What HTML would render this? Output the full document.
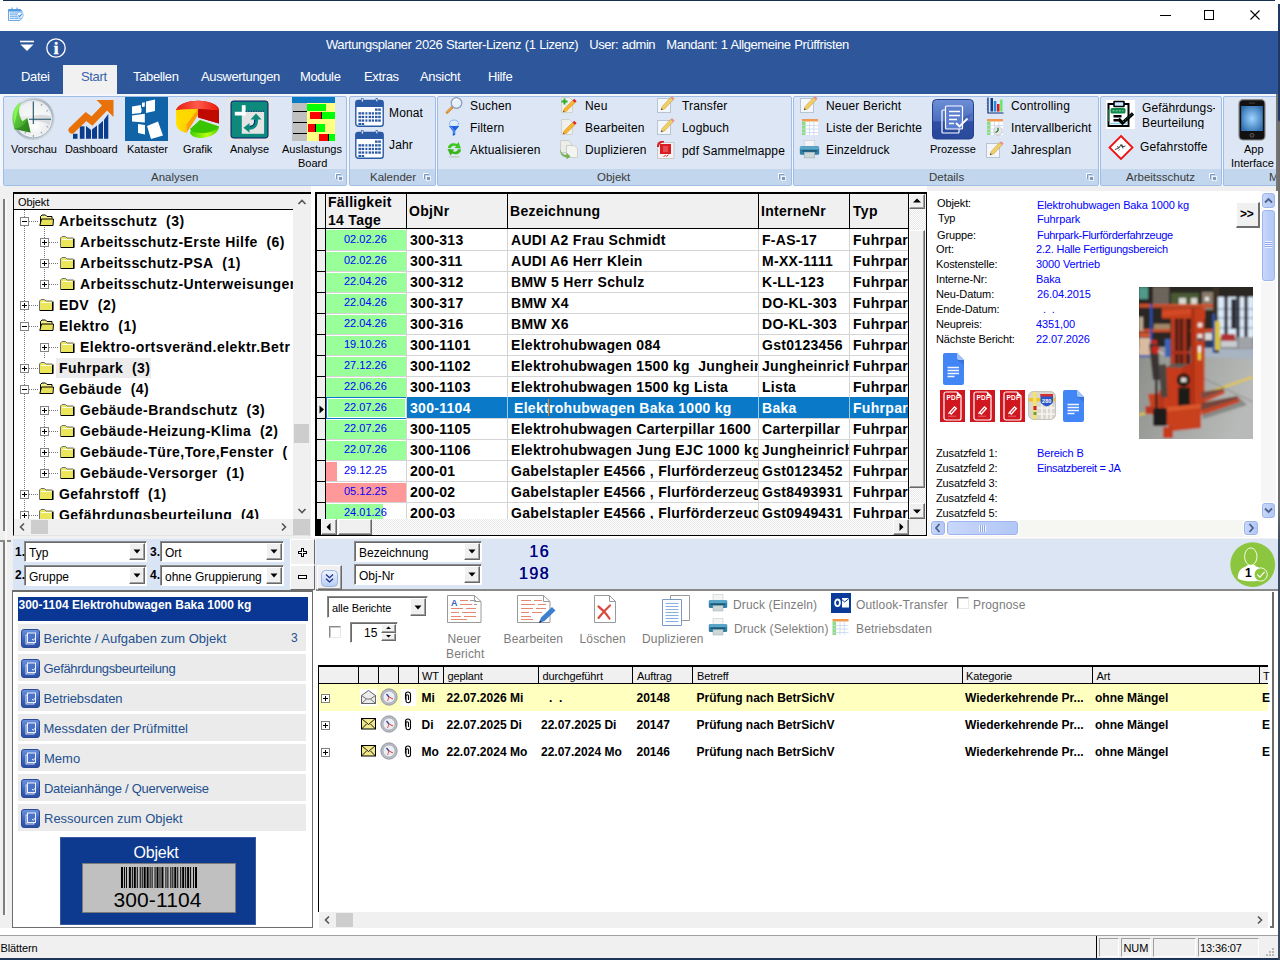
<!DOCTYPE html>
<html><head><meta charset="utf-8">
<style>
*{box-sizing:border-box;margin:0;padding:0}
html,body{width:1280px;height:960px;overflow:hidden;background:#fff;font-family:"Liberation Sans",sans-serif;font-size:12px;color:#000}
.a{position:absolute}
.t{position:absolute;white-space:nowrap;line-height:1}
#blue{left:0;top:31px;width:1278px;height:63px;background:#2e579b}
.menu{color:#fff;font-size:13px;top:70px;letter-spacing:-0.35px}
.grp{position:absolute;top:96px;height:90px;background:#dce6f4;border:1px solid #9ebde7;border-radius:2px}
.grp .ft{position:absolute;left:0;right:0;bottom:0;height:16px;background:#c2d6ed}
.grp .fl{position:absolute;bottom:2px;font-size:11.5px;color:#3b3b3b;line-height:1;white-space:nowrap}
.rl{position:absolute;font-size:12px;line-height:1;white-space:nowrap;color:#000;letter-spacing:0.15px}
.rl.b{font-size:11px;letter-spacing:0}
.ms{font-size:11px;letter-spacing:-0.12px}
.tb{font-size:14px;font-weight:bold;letter-spacing:0.45px}
.gb{font-size:14px;font-weight:bold;letter-spacing:0.3px}
.dl{position:absolute;width:8px;height:8px;bottom:4px}
</style></head><body>
<!-- TITLE BAR -->
<div class="a" style="left:3px;top:0;width:1272px;height:1px;background:#17304f"></div>
<div class="a" style="left:1278px;top:4px;width:2px;height:956px;background:linear-gradient(#1f3864 0,#1f3864 116px,#6e6e6e 118px,#6e6e6e 500px,#3c4a60 540px,#3c4a60 100%);z-index:50"></div>
<svg class="a" style="left:7px;top:6px" width="18" height="16" viewBox="0 0 18 16"><path d="M1.500 3.500h12l1.500 1.500v7l-2 2.500h-11.500z" fill="#eaf3fd" stroke="#6aa8e6"/><rect x="1.500" y="3.500" width="12.500" height="2" fill="#4a98e0"/><path d="M5 1.500v3M10 1.500v3" stroke="#4a98e0" stroke-width="1"/><path d="M3 7h8M3 8.800h8M3 10.600h8M3 12.400h8" stroke="#5aa2e4" stroke-width="0.900"/><path d="M5 6.500v6.500M7.500 6.500v6.500" stroke="#cfe2f8" stroke-width="0.500"/><circle cx="13" cy="9.300" r="3.300" fill="#f4f9ff" stroke="#7ab2ea" stroke-width="0.800"/><path d="M11.300 9.300l1.300 1.400 2.300-2.800" stroke="#3a8ee0" stroke-width="1.100" fill="none"/></svg>
<svg class="a" style="left:1155px;top:8px" width="110" height="14" viewBox="0 0 110 14"><path d="M5 7.5h11" stroke="#000" stroke-width="1"/><rect x="49.5" y="2.5" width="9" height="9" fill="none" stroke="#000"/><path d="M95.5 2.5l9 9M104.500 2.500l-9 9" stroke="#000" stroke-width="1.1"/></svg>
<!-- BLUE BAR -->
<div id="blue" class="a"></div>
<svg class="a" style="left:18px;top:38px" width="52" height="22" viewBox="0 0 52 22"><path d="M2 3.500h14" stroke="#fff" stroke-width="1.6"/><path d="M2.500 6.500h13l-6.500 6.500z" fill="#fff"/><circle cx="38" cy="10" r="9.200" fill="none" stroke="#fff" stroke-width="1.300"/><text x="38" y="16" font-family="Liberation Serif" font-weight="bold" font-size="17" fill="#fff" stroke="#fff" stroke-width="0.500" text-anchor="middle">i</text></svg>
<div class="t" style="left:326px;top:38px;color:#fff;font-size:13px;letter-spacing:-0.42px;word-spacing:0.5px">Wartungsplaner 2026 Starter-Lizenz (1 Lizenz)&nbsp;&nbsp;&nbsp;User: admin&nbsp;&nbsp;&nbsp;Mandant: 1 Allgemeine Prüffristen</div>
<div class="a" style="left:63px;top:65px;width:54px;height:29px;background:#f1f1f1"></div>
<div class="t menu" style="left:21px">Datei</div>
<div class="t menu" style="left:81px;color:#3a62a8">Start</div>
<div class="t menu" style="left:133px">Tabellen</div>
<div class="t menu" style="left:201px">Auswertungen</div>
<div class="t menu" style="left:300px">Module</div>
<div class="t menu" style="left:364px">Extras</div>
<div class="t menu" style="left:420px">Ansicht</div>
<div class="t menu" style="left:488px">Hilfe</div>
<!-- RIBBON -->
<div class="a" style="left:0;top:94px;width:1278px;height:94px;background:#f4f6fa"></div>
<div class="grp" id="g1" style="left:3px;width:344px"><div class="ft"></div><div class="fl" style="left:147px">Analysen</div></div>
<div class="grp" id="g2" style="left:349px;width:87px"><div class="ft"></div><div class="fl" style="left:20px">Kalender</div></div>
<div class="grp" id="g3" style="left:437px;width:355px"><div class="ft"></div><div class="fl" style="left:159px">Objekt</div></div>
<div class="grp" id="g4" style="left:793px;width:306px"><div class="ft"></div><div class="fl" style="left:135px">Details</div></div>
<div class="grp" id="g5" style="left:1100px;width:122px"><div class="ft"></div><div class="fl" style="left:25px">Arbeitsschutz</div></div>
<div class="grp" id="g6" style="left:1223px;width:55px;border-right:0;overflow:hidden"><div class="ft"></div><div class="fl" style="left:45px">M</div></div>
<svg width="0" height="0" style="position:absolute">
<defs>
<linearGradient id="gGreen" x1="0" y1="0" x2="1" y2="1"><stop offset="0" stop-color="#7af04a"/><stop offset="1" stop-color="#2c8a1f"/></linearGradient>
<radialGradient id="gClock" cx="0.55" cy="0.7" r="0.7"><stop offset="0" stop-color="#ffffff"/><stop offset="1" stop-color="#d4d8da"/></radialGradient>
<linearGradient id="gPro" x1="0" y1="0" x2="0" y2="1"><stop offset="0" stop-color="#6e8fd6"/><stop offset="0.55" stop-color="#4a6cbf"/><stop offset="0.56" stop-color="#2e4fa3"/><stop offset="1" stop-color="#2a4a9c"/></linearGradient>
<radialGradient id="gPhone" cx="0.5" cy="0.5" r="0.6"><stop offset="0" stop-color="#9fd4ff"/><stop offset="1" stop-color="#2f6fb0"/></radialGradient>
<linearGradient id="gRed" x1="0" y1="0" x2="1" y2="0"><stop offset="0" stop-color="#e81a0c"/><stop offset="0.5" stop-color="#ff5a4a"/><stop offset="1" stop-color="#e81a0c"/></linearGradient>
<linearGradient id="gYel" x1="0" y1="0" x2="1" y2="0"><stop offset="0" stop-color="#ffe400"/><stop offset="1" stop-color="#ffb000"/></linearGradient>
<linearGradient id="gGr2" x1="0" y1="0" x2="1" y2="0"><stop offset="0" stop-color="#3fd000"/><stop offset="0.6" stop-color="#b8ff10"/><stop offset="1" stop-color="#4fd000"/></linearGradient>
<symbol id="pencil" viewBox="0 0 18 18"><rect x="0.5" y="2.5" width="13" height="14" fill="#f3f7fc" stroke="#b9c4d2"/><path d="M4 14l1.200-3.600 8.400-9 2.600 2.400-8.600 9.200z" fill="#f2cf62" stroke="#b8923a" stroke-width="0.500"/><path d="M13.600 1.400l1.400-1.200 2.600 2.400-1.400 1.400z" fill="#ee8a8a"/><path d="M4 14l0.600-1.900 1.300 1.300z" fill="#444"/></symbol>
<symbol id="pencil2" viewBox="0 0 18 18"><path d="M1.500 1.500h8l3 3v12h-11z" fill="#efefec" stroke="#d2d2cc"/><path d="M3 16l1-3 8.600-8.600 2.400 2.400-8.800 8.600z" fill="#f6b52c" stroke="#d98a1c" stroke-width="0.500"/><path d="M12.600 4.400l1.600-1.600 2.400 2.400-1.600 1.600z" fill="#e02424"/><path d="M3 16l0.500-1.600 1.100 1.100z" fill="#444"/></symbol>
<symbol id="grid" viewBox="0 0 18 18"><rect x="1" y="1" width="16" height="16" fill="#fff"/><rect x="1" y="1" width="16" height="2.500" fill="#f29a4e"/><rect x="1" y="3.500" width="3.600" height="13.500" fill="#8fdc86"/><path d="M1 7.500h16M1 11h16M1 14.500h16M8.500 3.500v13.500M12.800 3.500v13.500" stroke="#c6d6ee" stroke-width="0.800"/></symbol>
<symbol id="printer" viewBox="0 0 20 18"><rect x="5" y="0.500" width="10" height="6" fill="#f2f4f6" stroke="#c8ccd0" stroke-width="0.600"/><rect x="0.800" y="6" width="18.400" height="8" rx="1.500" fill="#2f7ea6"/><rect x="0.800" y="6" width="18.400" height="3" rx="1.500" fill="#5aa6c8"/><rect x="5" y="11.500" width="10" height="5.500" fill="#cdd6d8" stroke="#9aa" stroke-width="0.500"/><rect x="3" y="9.500" width="14" height="1.600" fill="#1d5876"/></symbol>
<symbol id="cal" viewBox="0 0 29 29"><rect x="0.800" y="2.500" width="27.400" height="25.700" rx="2.500" fill="#fff" stroke="#2b5aa6" stroke-width="1.400"/><path d="M0.800 9V5a2.500 2.500 0 0 1 2.500-2.500h22.400a2.500 2.500 0 0 1 2.500 2.500v4z" fill="#2b5aa6"/><rect x="6.500" y="0.500" width="1.600" height="3.500" fill="#fff" stroke="#2b5aa6" stroke-width="0.600"/><rect x="21" y="0.500" width="1.600" height="3.500" fill="#fff" stroke="#2b5aa6" stroke-width="0.600"/><g fill="#2b5aa6"><rect x="20" y="10.500" width="2.600" height="2.300"/><rect x="23.200" y="10.500" width="2.600" height="2.300"/><rect x="3.400" y="14.200" width="2.600" height="2.300"/><rect x="6.600" y="14.200" width="2.600" height="2.300"/><rect x="10.400" y="14.200" width="2" height="2.300"/><rect x="13.600" y="14.200" width="2.600" height="2.300"/><rect x="17" y="14.200" width="2" height="2.300"/><rect x="20" y="14.200" width="2.600" height="2.300"/><rect x="23.200" y="14.200" width="2.600" height="2.300"/><rect x="3.400" y="17.800" width="2.600" height="2.300"/><rect x="6.600" y="17.800" width="2.600" height="2.300"/><rect x="10.400" y="17.800" width="2" height="2.300"/><rect x="13.600" y="17.800" width="2.600" height="2.300"/><rect x="17" y="17.800" width="2" height="2.300"/><rect x="20" y="17.800" width="2.600" height="2.300"/><rect x="23.200" y="17.800" width="2.600" height="2.300"/><rect x="3.400" y="21.400" width="2.600" height="2.300"/><rect x="6.600" y="21.400" width="2.600" height="2.300"/><rect x="10.400" y="21.400" width="2" height="2.300"/><rect x="13.600" y="21.400" width="2.600" height="2.300"/><rect x="17" y="21.400" width="2" height="2.300"/><rect x="20" y="21.400" width="2.600" height="2.300"/><rect x="23.200" y="21.400" width="2.600" height="2.300"/><rect x="3.400" y="25" width="2.600" height="2"/><rect x="6.600" y="25" width="2.600" height="2"/></g></symbol>
<symbol id="dlg" viewBox="0 0 8 8"><path d="M0.500 5.500v-5h5" fill="none" stroke="#fff" stroke-width="1"/><path d="M1.500 6v-4.500h4.500" fill="none" stroke="#7f97bb" stroke-width="1"/><rect x="3.500" y="3.500" width="4" height="4" fill="#7f97bb" stroke="#fff" stroke-width="0.800"/></symbol>
</defs></svg>
<!-- group1 big icons -->
<svg class="a" style="left:9px;top:96px" width="48" height="46" viewBox="0 0 48 46"><defs><linearGradient id="gRim" x1="0" y1="0" x2="1" y2="1"><stop offset="0" stop-color="#e8eef2"/><stop offset="0.5" stop-color="#aab6c0"/><stop offset="1" stop-color="#dfe8ee"/></linearGradient></defs><circle cx="24.300" cy="22.800" r="21.300" fill="url(#gRim)"/><circle cx="24.300" cy="22.800" r="19" fill="#f4f6f8" stroke="#8fa2b4" stroke-width="0.700"/><circle cx="24.300" cy="22.800" r="17.600" fill="url(#gClock)"/><path d="M7 20.500a17.500 17.500 0 0 1 34.600 0c-6-2-11-2.300-17-1.200-6 1-12 1.500-17.600 1.200z" fill="#fff" opacity="0.600"/><path d="M24.300 20c6-1.500 12-1 17.300 0.500 0.500 3 0 6-1 8.500-5-3-11-4-16.300-4z" fill="#c9ced2" opacity="0.550"/><path d="M24.300 5.500v22.500M20 23.300h22" stroke="#1d4f66" stroke-width="1.100"/><g stroke="#6f7f8a" stroke-width="0.800"><path d="M24.300 39v2M33 8l-1 1.700M39.200 14.300l-1.700 1M39.200 31.300l-1.700-1M33 37.600l-1-1.700M16 37.600l1-1.700"/></g><path d="M12 6C5 10 1.500 19 5 30L5 33.100 21.500 36.400 18.200 21.900 13.500 25.200C9.500 20 9 12 12 6z" fill="url(#gGreen)"/><path d="M12 6C6 10 2.500 18 5.500 28c1.500-6 3-14 6.500-22z" fill="#8dff5c" opacity="0.750"/><path d="M5 33.100l16.500 3.300-3.300-14.500c0 5-6 10-13.200 11.200z" fill="#2c7a1c" opacity="0.600"/></svg>
<svg class="a" style="left:66px;top:98px" width="50" height="42" viewBox="0 0 50 42"><g fill="#0b3d8c"><path d="M7 35.800h4.500v5h-4.500z"/><path d="M13.800 28.300h4.700v12.500h-4.700z"/><path d="M20 27.900l5 4.100v8.800h-5z"/><path d="M26 31.600l5-4.200v13.400h-5z"/><path d="M32.500 27l4.500-4.300v18.100h-4.500z"/><path d="M38 21.800l4.300-5.800v24.800h-4.300z"/></g><path d="M6 32l14-13.500 6 4.500 13-13.500" fill="none" stroke="#e8710a" stroke-width="7" stroke-linejoin="miter" stroke-linecap="round"/><path d="M30.500 2h17v17z" fill="#e8710a"/></svg>
<svg class="a" style="left:125px;top:97px" width="43" height="44" viewBox="0 0 43 44"><rect width="43" height="44" fill="#0f63a6"/><g fill="#fff"><path d="M7 9.500l9-1.500v8l-9 1z"/><path d="M17 5.800l2.800-0.500v4.300l-2.800 0.400z"/><path d="M14.500 11.500l2-0.300v3.500l-2 0.300z"/><path d="M21 4.500l9-2v11.500l-9 2z"/><path d="M7 18.500l12.800-1.700v8.700l-12.800-1z"/><path d="M13 27l7 1v9.500l-7-1.500z"/><path d="M22 29l11-4.500 5 14-12 3.500z"/></g></svg>
<svg class="a" style="left:175px;top:100px" width="46" height="40" viewBox="0 0 46 40"><path d="M1 10c4-8 18-10.500 30-8.500 8 1.500 13 5 13 9l0 13-20-6-1-8.500z" fill="#c40a00"/><path d="M1 10c4-8 18-10.500 30-8.500 8 1.500 13 5 13 9l-21-1.500z" fill="url(#gRed)"/><path d="M23 9l21 1.500v13l-21-6z" fill="#c00a00"/><path d="M1 10l22-1-11.500 15.500 0 8.500c-6-1.500-10-4.500-10.500-9z" fill="url(#gYel)"/><path d="M1 10l22-1-11.500 15.500c-5-2-10-7-10.500-14.500z" fill="#ffd800"/><path d="M23 9l-11.500 15.500v8.500l11.500-18z" fill="#ffa000"/><path d="M25 20l19 6.500c0 6-8 11-17 11.500-6 0.300-12-2-12-6z" fill="url(#gGr2)"/><path d="M25 20l19 6.500c-2 4-10 6.500-16 6.500-6 0-12-0.500-13-4z" fill="#38c400"/></svg>
<svg class="a" style="left:227px;top:97px" width="44" height="44" viewBox="0 0 44 44"><rect width="44" height="44" fill="#e6e6e6"/><rect x="4" y="4" width="37" height="37" rx="2.500" fill="#0e8a7c" stroke="#0a146e" stroke-width="1"/><rect x="14.800" y="14.800" width="22.300" height="22" fill="#e4e4e4"/><rect x="14.800" y="8.200" width="3.800" height="9" fill="#fff"/><rect x="7.800" y="14.800" width="11" height="3.700" fill="#fff"/><path d="M18.600 14.300h18.500" stroke="#0a146e" stroke-width="0.800" stroke-dasharray="1.500 1"/><path d="M29 16.500l-5.500 6h3.500c0.500 4-1 6-4.500 6.300v-2.800l-6 4.800 6 5v-3c6-0.300 9-4 8.500-10.300h3.500z" fill="#0e8a7c"/><path d="M23 29.500c3.500-0.500 5-2.500 4.500-6.500" fill="none" stroke="#0a146e" stroke-width="1"/></svg>
<svg class="a" style="left:292px;top:97px" width="43" height="44" viewBox="0 0 43 44" shape-rendering="crispEdges"><rect width="43" height="44" fill="#ffff80"/><rect width="43" height="6" fill="#0a7bc4"/><rect x="0" y="6" width="15" height="38" fill="#c0c0c0"/><rect x="15" y="7" width="19" height="7" fill="#00ff00"/><rect x="1" y="14" width="14" height="1" fill="#000"/><rect x="18" y="15.300" width="11" height="6.700" fill="#ff0000"/><rect x="29" y="15.300" width="1" height="6.700" fill="#000"/><rect x="30" y="15.300" width="13" height="6.700" fill="#00ff00"/><rect x="1" y="24.700" width="14" height="1" fill="#000"/><rect x="16" y="27" width="7" height="8" fill="#ff0000"/><rect x="23" y="27" width="1" height="8" fill="#000"/><rect x="24" y="27" width="9" height="8" fill="#00ff00"/><rect x="1" y="36" width="14" height="1" fill="#000"/><rect x="27" y="37" width="9" height="7" fill="#ff0000"/><rect x="36" y="37" width="1" height="7" fill="#000"/><rect x="37" y="37" width="6" height="7" fill="#00ff00"/></svg>
<div class="rl b" style="left:11px;top:144px">Vorschau</div>
<div class="rl b" style="left:65px;top:144px;letter-spacing:-0.15px">Dashboard</div>
<div class="rl b" style="left:127px;top:144px">Kataster</div>
<div class="rl b" style="left:183px;top:144px">Grafik</div>
<div class="rl b" style="left:230px;top:144px">Analyse</div>
<div class="rl b" style="left:282px;top:144px">Auslastungs</div>
<div class="rl b" style="left:298px;top:158px">Board</div>
<svg class="a" style="left:335px;top:173px" width="8" height="8"><use href="#dlg"/></svg>
<!-- group2 -->
<svg class="a" style="left:355px;top:98px" width="29" height="29"><use href="#cal"/></svg>
<svg class="a" style="left:355px;top:130px" width="29" height="29"><use href="#cal"/></svg>
<div class="rl" style="left:389px;top:107px">Monat</div>
<div class="rl" style="left:389px;top:139px">Jahr</div>
<svg class="a" style="left:423px;top:173px" width="8" height="8"><use href="#dlg"/></svg>
<!-- group3 col1 -->
<svg class="a" style="left:445px;top:96px" width="19" height="19" viewBox="0 0 19 19"><path d="M2 16.500l5.500-5.500" stroke="#d98a2c" stroke-width="2.600" stroke-linecap="round"/><path d="M2.300 16l4.500-4.500" stroke="#f7c98a" stroke-width="0.800"/><circle cx="11.500" cy="7" r="5.300" fill="#e6f2fb" stroke="#8a98b8" stroke-width="1.200"/><path d="M8.500 5.500a3.500 3.500 0 0 1 4-2" stroke="#fff" stroke-width="1.200" fill="none"/></svg>
<svg class="a" style="left:448px;top:119px" width="12" height="18" viewBox="0 0 12 18"><ellipse cx="6" cy="4.500" rx="4.600" ry="3.400" fill="#dcecfb" stroke="#3b7be0" stroke-width="0.800" stroke-dasharray="1.200 0.800"/><path d="M0.800 7l4 5v5l2.400-1.200v-3.800l4-5z" fill="#1f5fe0"/><path d="M2.500 7.500l3.500 4v3" stroke="#7fb4ff" stroke-width="0.900" fill="none"/></svg>
<svg class="a" style="left:446px;top:140px" width="17" height="18" viewBox="0 0 17 18"><path d="M2 8c0-4 5-6 9-4l1.500-2 2.500 6.500-6.500-0.500 1.500-1.800c-2.500-1-5 0-5 2z" fill="#3fc71f"/><path d="M15 9.500c0 4-5 6-9 4l-1.500 2-3-6.500 6.800 0.500-1.500 1.800c2.500 1 5 0 5-2z" fill="#35b51a"/><ellipse cx="8.500" cy="16.800" rx="6" ry="0.900" fill="#b6c8b0" opacity="0.700"/></svg>
<div class="rl" style="left:470px;top:100px">Suchen</div>
<div class="rl" style="left:470px;top:122px">Filtern</div>
<div class="rl" style="left:470px;top:144px">Aktualisieren</div>
<!-- col2 -->
<svg class="a" style="left:560px;top:96px" width="18" height="18"><use href="#pencil2"/></svg>
<svg class="a" style="left:561px;top:98px" width="7" height="7" viewBox="0 0 7 7"><path d="M3.500 0.500v6M0.500 3.500h6" stroke="#2fae2f" stroke-width="2"/></svg>
<svg class="a" style="left:560px;top:118px" width="18" height="18"><use href="#pencil2"/></svg>
<svg class="a" style="left:559px;top:140px" width="20" height="19" viewBox="0 0 20 19"><path d="M1.500 0.500h8l3 3v9h-11z" fill="#ececea" stroke="#cfcfca"/><path d="M7.500 5.500h8l3 3v9h-11z" fill="#f3f3f1" stroke="#cfcfca"/><path d="M1.500 1v8c0.500 5 4 6 6 6v-2.500l4 4-4 3v-2.200c-4 0-6.800-3-6-8.300z" fill="#79b052"/></svg>
<div class="rl" style="left:585px;top:100px">Neu</div>
<div class="rl" style="left:585px;top:122px">Bearbeiten</div>
<div class="rl" style="left:585px;top:144px">Duplizieren</div>
<!-- col3 -->
<svg class="a" style="left:657px;top:96px" width="18" height="18"><use href="#pencil"/></svg>
<svg class="a" style="left:657px;top:118px" width="18" height="18"><use href="#pencil"/></svg>
<svg class="a" style="left:657px;top:141px" width="18" height="18" viewBox="0 0 18 18"><rect x="0.500" y="1.500" width="16.500" height="16" fill="#f2f2f2" stroke="#c9c9c9"/><path d="M3 3h11v10h-11z" fill="#d81c24"/><path d="M1 6c0-3.500 2-5.500 6-5.500" stroke="#d81c24" stroke-width="2" fill="none"/><path d="M6 5h5v6h-5z" fill="#e84a50"/><path d="M6.500 15.500l2-1 1 0.800 2-1.500" stroke="#d81c24" stroke-width="0.900" fill="none"/></svg>
<div class="rl" style="left:682px;top:100px">Transfer</div>
<div class="rl" style="left:682px;top:122px">Logbuch</div>
<div class="rl" style="left:682px;top:145px">pdf Sammelmappe</div>
<svg class="a" style="left:778px;top:173px" width="8" height="8"><use href="#dlg"/></svg>
<!-- group4 -->
<svg class="a" style="left:800px;top:96px" width="18" height="18"><use href="#pencil"/></svg>
<svg class="a" style="left:801px;top:118px" width="18" height="18"><use href="#grid"/></svg>
<svg class="a" style="left:799px;top:140px" width="21" height="19"><use href="#printer"/></svg>
<div class="rl" style="left:826px;top:100px">Neuer Bericht</div>
<div class="rl" style="left:826px;top:122px">Liste der Berichte</div>
<div class="rl" style="left:826px;top:144px">Einzeldruck</div>
<svg class="a" style="left:932px;top:99px" width="42" height="41" viewBox="0 0 42 41"><rect x="0.500" y="0.500" width="41" height="39.500" rx="4" fill="url(#gPro)" stroke="#24408c"/><path d="M41 14l-22 26h-18.500v-8z" fill="#24439a" opacity="0.350"/><rect x="10" y="11" width="17" height="23" rx="1" fill="none" stroke="#fff" stroke-width="1.200"/><rect x="13.500" y="7" width="17" height="23" rx="1" fill="#5c7fce" stroke="#fff" stroke-width="1.200"/><path d="M17 12.500h11M17 16.500h11M17 20.500h8M17 24.500h5" stroke="#fff" stroke-width="1.500"/><path d="M24 24l3.500 3.500 8-8" stroke="#fff" stroke-width="1.800" fill="none"/></svg>
<div class="rl b" style="left:930px;top:144px">Prozesse</div>
<svg class="a" style="left:986px;top:97px" width="18" height="17" viewBox="0 0 18 17"><path d="M2 0.500v15.500h15.500" stroke="#0b2f7a" stroke-width="1.200" fill="none"/><path d="M0.800 3h1.200M0.800 6h1.200M0.800 9h1.200M0.800 12h1.200" stroke="#0b2f7a" stroke-width="0.700"/><rect x="4.500" y="1" width="2.500" height="13.500" fill="#0b3d8c"/><rect x="7.800" y="4" width="2.500" height="10.500" fill="#2a8adc"/><rect x="11" y="7" width="2.500" height="7.500" fill="#e81414"/><rect x="14.200" y="2.500" width="2.300" height="12" fill="#5fe85f"/></svg>
<svg class="a" style="left:986px;top:118px" width="18" height="18"><use href="#grid"/></svg>
<svg class="a" style="left:993px;top:126px" width="10" height="10" viewBox="0 0 10 10"><circle cx="5" cy="5" r="4.200" fill="#e8e8e8" stroke="#b5b5b5" stroke-width="0.600"/><path d="M5 5v-3M5 5l-2.500 1.500" stroke="#137a3a" stroke-width="1.300"/></svg>
<svg class="a" style="left:986px;top:141px" width="18" height="18"><use href="#pencil"/></svg>
<div class="rl" style="left:1011px;top:100px">Controlling</div>
<div class="rl" style="left:1011px;top:122px">Intervallbericht</div>
<div class="rl" style="left:1011px;top:144px">Jahresplan</div>
<svg class="a" style="left:1086px;top:173px" width="8" height="8"><use href="#dlg"/></svg>
<!-- group5 -->
<svg class="a" style="left:1106px;top:100px" width="29" height="29" viewBox="0 0 29 29"><rect width="29" height="29" fill="#fff"/><path d="M2.500 4h20v22h-20z" fill="#fff" stroke="#000" stroke-width="2"/><path d="M3.500 23.500h18" stroke="#8fd0f0" stroke-width="1.500"/><rect x="8" y="1.500" width="10" height="5" rx="0.500" fill="#cfe8ff" stroke="#000" stroke-width="1.600"/><rect x="4.500" y="8" width="15" height="5.500" rx="1.500" fill="#0c8a4a"/><path d="M6.500 10.800h11" stroke="#9fd4b0" stroke-width="1" stroke-dasharray="2 1.200"/><path d="M2.300 9.500v12" stroke="#0c8a4a" stroke-width="1"/><rect x="7.500" y="15" width="8" height="2.500" fill="#000"/><rect x="7.500" y="19" width="5" height="2.500" fill="#000"/><path d="M12.500 19l4 4 10.500-9.500" stroke="#000" stroke-width="3.400" fill="none"/><path d="M17 22l9-8" stroke="#0c8a4a" stroke-width="1" stroke-dasharray="1.500 1"/></svg>
<div class="a" style="left:1142px;top:102px;height:14px;overflow:hidden;width:72.500px"><div class="rl" style="left:0;top:0;letter-spacing:0.1px">Gefährdungs-</div></div>
<div class="a" style="left:1142px;top:117px;height:12px;overflow:hidden;width:70px"><div class="rl" style="left:0;top:0">Beurteilung</div></div>
<svg class="a" style="left:1107px;top:134px" width="28" height="27" viewBox="0 0 28 27"><path d="M14 2l11.500 11.500-11.500 11.500-11.500-11.500z" fill="#fff" stroke="#f01010" stroke-width="1.800"/><path d="M8 15.500l4-1.500 2-3.500 1 2.500 3.500-1M10 12.500l2 1M15 10.500l1 4M12.500 15.500l-1 1" stroke="#333" stroke-width="0.900" fill="none"/></svg>
<div class="rl" style="left:1140px;top:141px">Gefahrstoffe</div>
<svg class="a" style="left:1209px;top:173px" width="8" height="8"><use href="#dlg"/></svg>
<!-- group6 -->
<svg class="a" style="left:1238px;top:99px" width="28" height="42" viewBox="0 0 28 42"><rect x="1" y="0.700" width="26" height="40.300" rx="4" fill="#111" stroke="#8a8a8a" stroke-width="1.200"/><rect x="3.200" y="7" width="21.600" height="25" fill="url(#gPhone)"/><rect x="11" y="3.500" width="6" height="1" fill="#444"/><circle cx="14" cy="36.300" r="2" fill="#222" stroke="#777" stroke-width="0.600"/></svg>
<div class="rl b" style="left:1244px;top:144px">App</div>
<div class="rl b" style="left:1231px;top:158px">Interface</div>

<!--RIBBON-ITEMS-END-->
<!--MAIN-->
<div class="a" style="left:0;top:186px;width:1278px;height:750px;background:#f0f0f0"></div>
<div class="a" style="left:1276px;top:94px;width:2px;height:97px;background:#757575"></div>
<div class="a" style="left:1276px;top:191px;width:2px;height:745px;background:#fff"></div>
<div class="a" style="left:3px;top:199px;width:2px;height:332px;background:#7e7e7e"></div>
<div class="a" style="left:3px;top:541px;width:2px;height:374px;background:#7e7e7e"></div>
<div class="a" style="left:0px;top:540px;width:11px;height:2px;background:#8a8a8a"></div>
<div class="a" style="left:5px;top:199px;width:2px;height:716px;background:#f8f8f8"></div>
<div class="a" style="left:13px;top:192px;width:299px;height:344px;background:#fff;border:1px solid #000;border-top:2px solid #000;border-bottom:1px solid #e4e4e4"></div>
<div class="a" style="left:14px;top:194px;width:279px;height:15px;background:#f0f0f0"></div>
<div class="a" style="left:14px;top:209px;width:279px;height:1px;background:#000"></div>
<div class="t ms" style="left:18px;top:197px">Objekt</div>
<div class="a" style="left:293px;top:194px;width:18px;height:325px;background:#f0f0f0"></div>
<svg class="a" style="left:297px;top:198px" width="10" height="8" viewBox="0 0 10 8"><path d="M1.500 6l3.500-3.500 3.500 3.500" stroke="#555" stroke-width="1.600" fill="none"/></svg>
<svg class="a" style="left:297px;top:507px" width="10" height="8" viewBox="0 0 10 8"><path d="M1.500 2l3.500 3.500 3.500-3.500" stroke="#555" stroke-width="1.600" fill="none"/></svg>
<div class="a" style="left:294px;top:424px;width:15px;height:19px;background:#cdcdcd"></div>
<div class="a" style="left:14px;top:519px;width:297px;height:16px;background:#f0f0f0"></div>
<div class="a" style="left:31px;top:520px;width:17px;height:14px;background:#cdcdcd"></div>
<div class="a" style="left:293px;top:519px;width:17px;height:16px;background:#cdcdcd"></div>
<svg class="a" style="left:18px;top:522px" width="8" height="10" viewBox="0 0 8 10"><path d="M6 1.500l-3.500 3.500 3.500 3.500" stroke="#555" stroke-width="1.600" fill="none"/></svg>
<svg class="a" style="left:280px;top:522px" width="8" height="10" viewBox="0 0 8 10"><path d="M2 1.500l3.500 3.500-3.500 3.500" stroke="#555" stroke-width="1.600" fill="none"/></svg>
<div class="a" style="left:14px;top:210px;width:279px;height:309px;overflow:hidden">
<div class="a" style="left:10px;top:0;width:1px;height:309px;background:repeating-linear-gradient(#777 0 1px,transparent 1px 2px)"></div>
<div class="a" style="left:30px;top:11px;width:1px;height:63px;background:repeating-linear-gradient(#777 0 1px,transparent 1px 2px)"></div>
<div class="a" style="left:30px;top:137px;width:1px;height:11px;background:repeating-linear-gradient(#777 0 1px,transparent 1px 2px)"></div>
<div class="a" style="left:30px;top:200px;width:1px;height:63px;background:repeating-linear-gradient(#777 0 1px,transparent 1px 2px)"></div>
<div class="a" style="left:15px;top:11px;width:9px;height:1px;background:repeating-linear-gradient(90deg,#777 0 1px,transparent 1px 2px)"></div>
<svg class="a" style="left:6px;top:7px" width="9" height="9" viewBox="0 0 9 9"><rect x="0.500" y="0.500" width="8" height="8" fill="#fff" stroke="#848484"/><path d="M2 4.500h5" stroke="#000" stroke-width="1"/></svg>
<svg class="a" style="left:25px;top:4px" width="16" height="13" viewBox="0 0 16 13"><path d="M1.500 11.500v-9l1.500-1.500h3.500l1.500 1.500h5v2" fill="#f4f08a" stroke="#000" stroke-width="1"/><path d="M0.800 11.500l1.700-6.500h12l-0.500 6.500z" fill="#e8e25a" stroke="#000" stroke-width="1"/></svg>
<div class="t tb" style="left:45px;top:4px">Arbeitsschutz&nbsp;&nbsp;(3)</div>
<div class="a" style="left:35px;top:32px;width:10px;height:1px;background:repeating-linear-gradient(90deg,#777 0 1px,transparent 1px 2px)"></div>
<svg class="a" style="left:26px;top:28px" width="9" height="9" viewBox="0 0 9 9"><rect x="0.500" y="0.500" width="8" height="8" fill="#fff" stroke="#848484"/><path d="M2 4.500h5M4.500 2v5" stroke="#000" stroke-width="1"/></svg>
<svg class="a" style="left:46px;top:26px" width="15" height="12" viewBox="0 0 15 12"><path d="M0.500 11.500v-9.500l1.500-1.500h3.500l1.500 1.500h6.500l1 1v8.500z" fill="#ece65c" stroke="#6e6e6e" stroke-width="1"/><path d="M13.500 3v8.500h-12.500" fill="none" stroke="#000" stroke-width="1"/><path d="M2 3.500h10.500" stroke="#fffde0" stroke-width="1"/></svg>
<div class="t tb" style="left:66px;top:25px">Arbeitsschutz-Erste Hilfe&nbsp;&nbsp;(6)</div>
<div class="a" style="left:35px;top:53px;width:10px;height:1px;background:repeating-linear-gradient(90deg,#777 0 1px,transparent 1px 2px)"></div>
<svg class="a" style="left:26px;top:49px" width="9" height="9" viewBox="0 0 9 9"><rect x="0.500" y="0.500" width="8" height="8" fill="#fff" stroke="#848484"/><path d="M2 4.500h5M4.500 2v5" stroke="#000" stroke-width="1"/></svg>
<svg class="a" style="left:46px;top:47px" width="15" height="12" viewBox="0 0 15 12"><path d="M0.500 11.500v-9.500l1.500-1.500h3.500l1.500 1.500h6.500l1 1v8.500z" fill="#ece65c" stroke="#6e6e6e" stroke-width="1"/><path d="M13.500 3v8.500h-12.500" fill="none" stroke="#000" stroke-width="1"/><path d="M2 3.500h10.500" stroke="#fffde0" stroke-width="1"/></svg>
<div class="t tb" style="left:66px;top:46px">Arbeitsschutz-PSA&nbsp;&nbsp;(1)</div>
<div class="a" style="left:35px;top:74px;width:10px;height:1px;background:repeating-linear-gradient(90deg,#777 0 1px,transparent 1px 2px)"></div>
<svg class="a" style="left:26px;top:70px" width="9" height="9" viewBox="0 0 9 9"><rect x="0.500" y="0.500" width="8" height="8" fill="#fff" stroke="#848484"/><path d="M2 4.500h5M4.500 2v5" stroke="#000" stroke-width="1"/></svg>
<svg class="a" style="left:46px;top:68px" width="15" height="12" viewBox="0 0 15 12"><path d="M0.500 11.500v-9.500l1.500-1.500h3.500l1.500 1.500h6.500l1 1v8.500z" fill="#ece65c" stroke="#6e6e6e" stroke-width="1"/><path d="M13.500 3v8.500h-12.500" fill="none" stroke="#000" stroke-width="1"/><path d="M2 3.500h10.500" stroke="#fffde0" stroke-width="1"/></svg>
<div class="t tb" style="left:66px;top:67px">Arbeitsschutz-Unterweisungen</div>
<div class="a" style="left:15px;top:95px;width:9px;height:1px;background:repeating-linear-gradient(90deg,#777 0 1px,transparent 1px 2px)"></div>
<svg class="a" style="left:6px;top:91px" width="9" height="9" viewBox="0 0 9 9"><rect x="0.500" y="0.500" width="8" height="8" fill="#fff" stroke="#848484"/><path d="M2 4.500h5M4.500 2v5" stroke="#000" stroke-width="1"/></svg>
<svg class="a" style="left:25px;top:89px" width="15" height="12" viewBox="0 0 15 12"><path d="M0.500 11.500v-9.500l1.500-1.500h3.500l1.500 1.500h6.500l1 1v8.500z" fill="#ece65c" stroke="#6e6e6e" stroke-width="1"/><path d="M13.500 3v8.500h-12.500" fill="none" stroke="#000" stroke-width="1"/><path d="M2 3.500h10.500" stroke="#fffde0" stroke-width="1"/></svg>
<div class="t tb" style="left:45px;top:88px">EDV&nbsp;&nbsp;(2)</div>
<div class="a" style="left:15px;top:116px;width:9px;height:1px;background:repeating-linear-gradient(90deg,#777 0 1px,transparent 1px 2px)"></div>
<svg class="a" style="left:6px;top:112px" width="9" height="9" viewBox="0 0 9 9"><rect x="0.500" y="0.500" width="8" height="8" fill="#fff" stroke="#848484"/><path d="M2 4.500h5" stroke="#000" stroke-width="1"/></svg>
<svg class="a" style="left:25px;top:109px" width="16" height="13" viewBox="0 0 16 13"><path d="M1.500 11.500v-9l1.500-1.500h3.500l1.500 1.500h5v2" fill="#f4f08a" stroke="#000" stroke-width="1"/><path d="M0.800 11.500l1.700-6.500h12l-0.500 6.500z" fill="#e8e25a" stroke="#000" stroke-width="1"/></svg>
<div class="t tb" style="left:45px;top:109px">Elektro&nbsp;&nbsp;(1)</div>
<div class="a" style="left:35px;top:137px;width:10px;height:1px;background:repeating-linear-gradient(90deg,#777 0 1px,transparent 1px 2px)"></div>
<svg class="a" style="left:26px;top:133px" width="9" height="9" viewBox="0 0 9 9"><rect x="0.500" y="0.500" width="8" height="8" fill="#fff" stroke="#848484"/><path d="M2 4.500h5M4.500 2v5" stroke="#000" stroke-width="1"/></svg>
<svg class="a" style="left:46px;top:131px" width="15" height="12" viewBox="0 0 15 12"><path d="M0.500 11.500v-9.500l1.500-1.500h3.500l1.500 1.500h6.500l1 1v8.500z" fill="#ece65c" stroke="#6e6e6e" stroke-width="1"/><path d="M13.500 3v8.500h-12.500" fill="none" stroke="#000" stroke-width="1"/><path d="M2 3.500h10.500" stroke="#fffde0" stroke-width="1"/></svg>
<div class="t tb" style="left:66px;top:130px">Elektro-ortsveränd.elektr.Betr</div>
<div class="a" style="left:15px;top:158px;width:9px;height:1px;background:repeating-linear-gradient(90deg,#777 0 1px,transparent 1px 2px)"></div>
<svg class="a" style="left:6px;top:154px" width="9" height="9" viewBox="0 0 9 9"><rect x="0.500" y="0.500" width="8" height="8" fill="#fff" stroke="#848484"/><path d="M2 4.500h5M4.500 2v5" stroke="#000" stroke-width="1"/></svg>
<svg class="a" style="left:25px;top:152px" width="15" height="12" viewBox="0 0 15 12"><path d="M0.500 11.500v-9.500l1.500-1.500h3.500l1.500 1.500h6.500l1 1v8.500z" fill="#ece65c" stroke="#6e6e6e" stroke-width="1"/><path d="M13.500 3v8.500h-12.500" fill="none" stroke="#000" stroke-width="1"/><path d="M2 3.500h10.500" stroke="#fffde0" stroke-width="1"/></svg>
<div class="a" style="left:42px;top:148px;width:95px;height:20px;background:#ececec"></div>
<div class="t tb" style="left:45px;top:151px">Fuhrpark&nbsp;&nbsp;(3)</div>
<div class="a" style="left:15px;top:179px;width:9px;height:1px;background:repeating-linear-gradient(90deg,#777 0 1px,transparent 1px 2px)"></div>
<svg class="a" style="left:6px;top:175px" width="9" height="9" viewBox="0 0 9 9"><rect x="0.500" y="0.500" width="8" height="8" fill="#fff" stroke="#848484"/><path d="M2 4.500h5" stroke="#000" stroke-width="1"/></svg>
<svg class="a" style="left:25px;top:172px" width="16" height="13" viewBox="0 0 16 13"><path d="M1.500 11.500v-9l1.500-1.500h3.500l1.500 1.500h5v2" fill="#f4f08a" stroke="#000" stroke-width="1"/><path d="M0.800 11.500l1.700-6.500h12l-0.500 6.500z" fill="#e8e25a" stroke="#000" stroke-width="1"/></svg>
<div class="t tb" style="left:45px;top:172px">Gebäude&nbsp;&nbsp;(4)</div>
<div class="a" style="left:35px;top:200px;width:10px;height:1px;background:repeating-linear-gradient(90deg,#777 0 1px,transparent 1px 2px)"></div>
<svg class="a" style="left:26px;top:196px" width="9" height="9" viewBox="0 0 9 9"><rect x="0.500" y="0.500" width="8" height="8" fill="#fff" stroke="#848484"/><path d="M2 4.500h5M4.500 2v5" stroke="#000" stroke-width="1"/></svg>
<svg class="a" style="left:46px;top:194px" width="15" height="12" viewBox="0 0 15 12"><path d="M0.500 11.500v-9.500l1.500-1.500h3.500l1.500 1.500h6.500l1 1v8.500z" fill="#ece65c" stroke="#6e6e6e" stroke-width="1"/><path d="M13.500 3v8.500h-12.500" fill="none" stroke="#000" stroke-width="1"/><path d="M2 3.500h10.500" stroke="#fffde0" stroke-width="1"/></svg>
<div class="t tb" style="left:66px;top:193px">Gebäude-Brandschutz&nbsp;&nbsp;(3)</div>
<div class="a" style="left:35px;top:221px;width:10px;height:1px;background:repeating-linear-gradient(90deg,#777 0 1px,transparent 1px 2px)"></div>
<svg class="a" style="left:26px;top:217px" width="9" height="9" viewBox="0 0 9 9"><rect x="0.500" y="0.500" width="8" height="8" fill="#fff" stroke="#848484"/><path d="M2 4.500h5M4.500 2v5" stroke="#000" stroke-width="1"/></svg>
<svg class="a" style="left:46px;top:215px" width="15" height="12" viewBox="0 0 15 12"><path d="M0.500 11.500v-9.500l1.500-1.500h3.500l1.500 1.500h6.500l1 1v8.500z" fill="#ece65c" stroke="#6e6e6e" stroke-width="1"/><path d="M13.500 3v8.500h-12.500" fill="none" stroke="#000" stroke-width="1"/><path d="M2 3.500h10.500" stroke="#fffde0" stroke-width="1"/></svg>
<div class="t tb" style="left:66px;top:214px">Gebäude-Heizung-Klima&nbsp;&nbsp;(2)</div>
<div class="a" style="left:35px;top:242px;width:10px;height:1px;background:repeating-linear-gradient(90deg,#777 0 1px,transparent 1px 2px)"></div>
<svg class="a" style="left:26px;top:238px" width="9" height="9" viewBox="0 0 9 9"><rect x="0.500" y="0.500" width="8" height="8" fill="#fff" stroke="#848484"/><path d="M2 4.500h5M4.500 2v5" stroke="#000" stroke-width="1"/></svg>
<svg class="a" style="left:46px;top:236px" width="15" height="12" viewBox="0 0 15 12"><path d="M0.500 11.500v-9.500l1.500-1.500h3.500l1.500 1.500h6.500l1 1v8.500z" fill="#ece65c" stroke="#6e6e6e" stroke-width="1"/><path d="M13.500 3v8.500h-12.500" fill="none" stroke="#000" stroke-width="1"/><path d="M2 3.500h10.500" stroke="#fffde0" stroke-width="1"/></svg>
<div class="t tb" style="left:66px;top:235px">Gebäude-Türe,Tore,Fenster&nbsp;&nbsp;(</div>
<div class="a" style="left:35px;top:263px;width:10px;height:1px;background:repeating-linear-gradient(90deg,#777 0 1px,transparent 1px 2px)"></div>
<svg class="a" style="left:26px;top:259px" width="9" height="9" viewBox="0 0 9 9"><rect x="0.500" y="0.500" width="8" height="8" fill="#fff" stroke="#848484"/><path d="M2 4.500h5M4.500 2v5" stroke="#000" stroke-width="1"/></svg>
<svg class="a" style="left:46px;top:257px" width="15" height="12" viewBox="0 0 15 12"><path d="M0.500 11.500v-9.500l1.500-1.500h3.500l1.500 1.500h6.500l1 1v8.500z" fill="#ece65c" stroke="#6e6e6e" stroke-width="1"/><path d="M13.500 3v8.500h-12.500" fill="none" stroke="#000" stroke-width="1"/><path d="M2 3.500h10.500" stroke="#fffde0" stroke-width="1"/></svg>
<div class="t tb" style="left:66px;top:256px">Gebäude-Versorger&nbsp;&nbsp;(1)</div>
<div class="a" style="left:15px;top:284px;width:9px;height:1px;background:repeating-linear-gradient(90deg,#777 0 1px,transparent 1px 2px)"></div>
<svg class="a" style="left:6px;top:280px" width="9" height="9" viewBox="0 0 9 9"><rect x="0.500" y="0.500" width="8" height="8" fill="#fff" stroke="#848484"/><path d="M2 4.500h5M4.500 2v5" stroke="#000" stroke-width="1"/></svg>
<svg class="a" style="left:25px;top:278px" width="15" height="12" viewBox="0 0 15 12"><path d="M0.500 11.500v-9.500l1.500-1.500h3.500l1.500 1.500h6.500l1 1v8.500z" fill="#ece65c" stroke="#6e6e6e" stroke-width="1"/><path d="M13.500 3v8.500h-12.500" fill="none" stroke="#000" stroke-width="1"/><path d="M2 3.500h10.500" stroke="#fffde0" stroke-width="1"/></svg>
<div class="t tb" style="left:45px;top:277px">Gefahrstoff&nbsp;&nbsp;(1)</div>
<div class="a" style="left:15px;top:305px;width:9px;height:1px;background:repeating-linear-gradient(90deg,#777 0 1px,transparent 1px 2px)"></div>
<svg class="a" style="left:6px;top:301px" width="9" height="9" viewBox="0 0 9 9"><rect x="0.500" y="0.500" width="8" height="8" fill="#fff" stroke="#848484"/><path d="M2 4.500h5M4.500 2v5" stroke="#000" stroke-width="1"/></svg>
<svg class="a" style="left:25px;top:299px" width="15" height="12" viewBox="0 0 15 12"><path d="M0.500 11.500v-9.500l1.500-1.500h3.500l1.500 1.500h6.500l1 1v8.500z" fill="#ece65c" stroke="#6e6e6e" stroke-width="1"/><path d="M13.500 3v8.500h-12.500" fill="none" stroke="#000" stroke-width="1"/><path d="M2 3.500h10.500" stroke="#fffde0" stroke-width="1"/></svg>
<div class="t tb" style="left:45px;top:298px">Gefährdungsbeurteilung&nbsp;&nbsp;(4)</div>
</div>
<div class="a" style="left:311px;top:186px;width:616px;height:352px;background:#fff"></div>
<div class="a" id="grid" style="left:315px;top:192px;width:612px;height:344px;background:#fff;border:1px solid #000;border-top:2px solid #000;border-left:2px solid #000;overflow:hidden">
<div class="a" style="left:0px;top:0px;width:592px;height:35px;background:#f0f0f0;"></div>
<div class="a" style="left:0px;top:34px;width:592px;height:1px;background:#000;"></div>
<div class="a" style="left:0px;top:35px;width:8px;height:290px;background:#f0f0f0;"></div>
<div class="a" style="left:8px;top:0px;width:1px;height:325px;background:#000;"></div>
<div class="a" style="left:89px;top:0px;width:1px;height:35px;background:#000;"></div>
<div class="a" style="left:190px;top:0px;width:1px;height:35px;background:#000;"></div>
<div class="a" style="left:441px;top:0px;width:1px;height:35px;background:#000;"></div>
<div class="a" style="left:532px;top:0px;width:1px;height:35px;background:#000;"></div>
<div class="a" style="left:591px;top:0px;width:1px;height:35px;background:#000;"></div>
<div class="t gb" style="left:11px;top:1px;">Fälligkeit</div>
<div class="t gb" style="left:11px;top:19px;">14 Tage</div>
<div class="t gb" style="left:92px;top:10px;">ObjNr</div>
<div class="t gb" style="left:193px;top:10px;">Bezeichnung</div>
<div class="t gb" style="left:444px;top:10px;">InterneNr</div>
<div class="t gb" style="left:536px;top:10px;">Typ</div>
<div class="a" style="left:9px;top:56px;width:583px;height:1px;background:#d4d4d4;"></div>
<div class="a" style="left:0px;top:56px;width:8px;height:1px;background:#000;"></div>
<div class="a" style="left:9px;top:36px;width:80px;height:20px;background:#99ff99;"></div>
<div class="t" style="left:27px;top:40px;font-size:11px;color:#0000ff">02.02.26</div>
<div class="a" style="left:90px;top:35px;width:100px;height:21px;overflow:hidden"><div class="t gb" style="left:3px;top:4px;color:#000">300-313</div></div>
<div class="a" style="left:191px;top:35px;width:250px;height:21px;overflow:hidden"><div class="t gb" style="left:3px;top:4px;color:#000">AUDI A2 Frau Schmidt</div></div>
<div class="a" style="left:442px;top:35px;width:90px;height:21px;overflow:hidden"><div class="t gb" style="left:3px;top:4px;color:#000">F-AS-17</div></div>
<div class="a" style="left:533px;top:35px;width:58px;height:21px;overflow:hidden"><div class="t gb" style="left:3px;top:4px;color:#000">Fuhrpark</div></div>
<div class="a" style="left:9px;top:77px;width:583px;height:1px;background:#d4d4d4;"></div>
<div class="a" style="left:0px;top:77px;width:8px;height:1px;background:#000;"></div>
<div class="a" style="left:9px;top:58px;width:80px;height:19px;background:#99ff99;"></div>
<div class="t" style="left:27px;top:61px;font-size:11px;color:#0000ff">02.02.26</div>
<div class="a" style="left:90px;top:56px;width:100px;height:21px;overflow:hidden"><div class="t gb" style="left:3px;top:4px;color:#000">300-311</div></div>
<div class="a" style="left:191px;top:56px;width:250px;height:21px;overflow:hidden"><div class="t gb" style="left:3px;top:4px;color:#000">AUDI A6 Herr Klein</div></div>
<div class="a" style="left:442px;top:56px;width:90px;height:21px;overflow:hidden"><div class="t gb" style="left:3px;top:4px;color:#000">M-XX-1111</div></div>
<div class="a" style="left:533px;top:56px;width:58px;height:21px;overflow:hidden"><div class="t gb" style="left:3px;top:4px;color:#000">Fuhrpark</div></div>
<div class="a" style="left:9px;top:98px;width:583px;height:1px;background:#d4d4d4;"></div>
<div class="a" style="left:0px;top:98px;width:8px;height:1px;background:#000;"></div>
<div class="a" style="left:9px;top:79px;width:80px;height:19px;background:#99ff99;"></div>
<div class="t" style="left:27px;top:82px;font-size:11px;color:#0000ff">22.04.26</div>
<div class="a" style="left:90px;top:77px;width:100px;height:21px;overflow:hidden"><div class="t gb" style="left:3px;top:4px;color:#000">300-312</div></div>
<div class="a" style="left:191px;top:77px;width:250px;height:21px;overflow:hidden"><div class="t gb" style="left:3px;top:4px;color:#000">BMW 5 Herr Schulz</div></div>
<div class="a" style="left:442px;top:77px;width:90px;height:21px;overflow:hidden"><div class="t gb" style="left:3px;top:4px;color:#000">K-LL-123</div></div>
<div class="a" style="left:533px;top:77px;width:58px;height:21px;overflow:hidden"><div class="t gb" style="left:3px;top:4px;color:#000">Fuhrpark</div></div>
<div class="a" style="left:9px;top:119px;width:583px;height:1px;background:#d4d4d4;"></div>
<div class="a" style="left:0px;top:119px;width:8px;height:1px;background:#000;"></div>
<div class="a" style="left:9px;top:100px;width:80px;height:19px;background:#99ff99;"></div>
<div class="t" style="left:27px;top:103px;font-size:11px;color:#0000ff">22.04.26</div>
<div class="a" style="left:90px;top:98px;width:100px;height:21px;overflow:hidden"><div class="t gb" style="left:3px;top:4px;color:#000">300-317</div></div>
<div class="a" style="left:191px;top:98px;width:250px;height:21px;overflow:hidden"><div class="t gb" style="left:3px;top:4px;color:#000">BMW X4</div></div>
<div class="a" style="left:442px;top:98px;width:90px;height:21px;overflow:hidden"><div class="t gb" style="left:3px;top:4px;color:#000">DO-KL-303</div></div>
<div class="a" style="left:533px;top:98px;width:58px;height:21px;overflow:hidden"><div class="t gb" style="left:3px;top:4px;color:#000">Fuhrpark</div></div>
<div class="a" style="left:9px;top:140px;width:583px;height:1px;background:#d4d4d4;"></div>
<div class="a" style="left:0px;top:140px;width:8px;height:1px;background:#000;"></div>
<div class="a" style="left:9px;top:121px;width:80px;height:19px;background:#99ff99;"></div>
<div class="t" style="left:27px;top:124px;font-size:11px;color:#0000ff">22.04.26</div>
<div class="a" style="left:90px;top:119px;width:100px;height:21px;overflow:hidden"><div class="t gb" style="left:3px;top:4px;color:#000">300-316</div></div>
<div class="a" style="left:191px;top:119px;width:250px;height:21px;overflow:hidden"><div class="t gb" style="left:3px;top:4px;color:#000">BMW X6</div></div>
<div class="a" style="left:442px;top:119px;width:90px;height:21px;overflow:hidden"><div class="t gb" style="left:3px;top:4px;color:#000">DO-KL-303</div></div>
<div class="a" style="left:533px;top:119px;width:58px;height:21px;overflow:hidden"><div class="t gb" style="left:3px;top:4px;color:#000">Fuhrpark</div></div>
<div class="a" style="left:9px;top:161px;width:583px;height:1px;background:#d4d4d4;"></div>
<div class="a" style="left:0px;top:161px;width:8px;height:1px;background:#000;"></div>
<div class="a" style="left:9px;top:142px;width:80px;height:19px;background:#99ff99;"></div>
<div class="t" style="left:27px;top:145px;font-size:11px;color:#0000ff">19.10.26</div>
<div class="a" style="left:90px;top:140px;width:100px;height:21px;overflow:hidden"><div class="t gb" style="left:3px;top:4px;color:#000">300-1101</div></div>
<div class="a" style="left:191px;top:140px;width:250px;height:21px;overflow:hidden"><div class="t gb" style="left:3px;top:4px;color:#000">Elektrohubwagen 084</div></div>
<div class="a" style="left:442px;top:140px;width:90px;height:21px;overflow:hidden"><div class="t gb" style="left:3px;top:4px;color:#000">Gst0123456</div></div>
<div class="a" style="left:533px;top:140px;width:58px;height:21px;overflow:hidden"><div class="t gb" style="left:3px;top:4px;color:#000">Fuhrpark</div></div>
<div class="a" style="left:9px;top:182px;width:583px;height:1px;background:#d4d4d4;"></div>
<div class="a" style="left:0px;top:182px;width:8px;height:1px;background:#000;"></div>
<div class="a" style="left:9px;top:163px;width:80px;height:19px;background:#99ff99;"></div>
<div class="t" style="left:27px;top:166px;font-size:11px;color:#0000ff">27.12.26</div>
<div class="a" style="left:90px;top:161px;width:100px;height:21px;overflow:hidden"><div class="t gb" style="left:3px;top:4px;color:#000">300-1102</div></div>
<div class="a" style="left:191px;top:161px;width:250px;height:21px;overflow:hidden"><div class="t gb" style="left:3px;top:4px;color:#000">Elektrohubwagen 1500 kg&nbsp; Jungheinrich</div></div>
<div class="a" style="left:442px;top:161px;width:90px;height:21px;overflow:hidden"><div class="t gb" style="left:3px;top:4px;color:#000">Jungheinrich</div></div>
<div class="a" style="left:533px;top:161px;width:58px;height:21px;overflow:hidden"><div class="t gb" style="left:3px;top:4px;color:#000">Fuhrpark</div></div>
<div class="a" style="left:9px;top:203px;width:583px;height:1px;background:#d4d4d4;"></div>
<div class="a" style="left:0px;top:203px;width:8px;height:1px;background:#000;"></div>
<div class="a" style="left:9px;top:184px;width:80px;height:19px;background:#99ff99;"></div>
<div class="t" style="left:27px;top:187px;font-size:11px;color:#0000ff">22.06.26</div>
<div class="a" style="left:90px;top:182px;width:100px;height:21px;overflow:hidden"><div class="t gb" style="left:3px;top:4px;color:#000">300-1103</div></div>
<div class="a" style="left:191px;top:182px;width:250px;height:21px;overflow:hidden"><div class="t gb" style="left:3px;top:4px;color:#000">Elektrohubwagen 1500 kg Lista</div></div>
<div class="a" style="left:442px;top:182px;width:90px;height:21px;overflow:hidden"><div class="t gb" style="left:3px;top:4px;color:#000">Lista</div></div>
<div class="a" style="left:533px;top:182px;width:58px;height:21px;overflow:hidden"><div class="t gb" style="left:3px;top:4px;color:#000">Fuhrpark</div></div>
<div class="a" style="left:9px;top:224px;width:583px;height:1px;background:#d4d4d4;"></div>
<div class="a" style="left:0px;top:224px;width:8px;height:1px;background:#000;"></div>
<div class="a" style="left:9px;top:205px;width:80px;height:19px;background:#99ff99;"></div>
<div class="a" style="left:90px;top:203px;width:502px;height:21px;background:#0a7ac8;"></div>
<div class="a" style="left:9px;top:203px;width:81px;height:22px;background:transparent;border:1px solid #0a7ac8;box-shadow:inset 0 0 0 1px #fff"></div>
<div class="t" style="left:27px;top:208px;font-size:11px;color:#0000ff">22.07.26</div>
<div class="a" style="left:90px;top:203px;width:100px;height:21px;overflow:hidden"><div class="t gb" style="left:3px;top:4px;color:#fff">300-1104</div></div>
<div class="a" style="left:191px;top:203px;width:250px;height:21px;overflow:hidden"><div class="t gb" style="left:6px;top:4px;color:#fff">Elektrohubwagen Baka 1000 kg</div></div>
<div class="a" style="left:442px;top:203px;width:90px;height:21px;overflow:hidden"><div class="t gb" style="left:3px;top:4px;color:#fff">Baka</div></div>
<div class="a" style="left:533px;top:203px;width:58px;height:21px;overflow:hidden"><div class="t gb" style="left:3px;top:4px;color:#fff">Fuhrpark</div></div>
<div class="a" style="left:9px;top:245px;width:583px;height:1px;background:#d4d4d4;"></div>
<div class="a" style="left:0px;top:245px;width:8px;height:1px;background:#000;"></div>
<div class="a" style="left:9px;top:226px;width:80px;height:19px;background:#99ff99;"></div>
<div class="t" style="left:27px;top:229px;font-size:11px;color:#0000ff">22.07.26</div>
<div class="a" style="left:90px;top:224px;width:100px;height:21px;overflow:hidden"><div class="t gb" style="left:3px;top:4px;color:#000">300-1105</div></div>
<div class="a" style="left:191px;top:224px;width:250px;height:21px;overflow:hidden"><div class="t gb" style="left:3px;top:4px;color:#000">Elektrohubwagen Carterpillar 1600</div></div>
<div class="a" style="left:442px;top:224px;width:90px;height:21px;overflow:hidden"><div class="t gb" style="left:3px;top:4px;color:#000">Carterpillar</div></div>
<div class="a" style="left:533px;top:224px;width:58px;height:21px;overflow:hidden"><div class="t gb" style="left:3px;top:4px;color:#000">Fuhrpark</div></div>
<div class="a" style="left:9px;top:266px;width:583px;height:1px;background:#d4d4d4;"></div>
<div class="a" style="left:0px;top:266px;width:8px;height:1px;background:#000;"></div>
<div class="a" style="left:9px;top:247px;width:80px;height:19px;background:#99ff99;"></div>
<div class="t" style="left:27px;top:250px;font-size:11px;color:#0000ff">22.07.26</div>
<div class="a" style="left:90px;top:245px;width:100px;height:21px;overflow:hidden"><div class="t gb" style="left:3px;top:4px;color:#000">300-1106</div></div>
<div class="a" style="left:191px;top:245px;width:250px;height:21px;overflow:hidden"><div class="t gb" style="left:3px;top:4px;color:#000">Elektrohubwagen Jung EJC 1000 kg</div></div>
<div class="a" style="left:442px;top:245px;width:90px;height:21px;overflow:hidden"><div class="t gb" style="left:3px;top:4px;color:#000">Jungheinrich</div></div>
<div class="a" style="left:533px;top:245px;width:58px;height:21px;overflow:hidden"><div class="t gb" style="left:3px;top:4px;color:#000">Fuhrpark</div></div>
<div class="a" style="left:9px;top:287px;width:583px;height:1px;background:#d4d4d4;"></div>
<div class="a" style="left:0px;top:287px;width:8px;height:1px;background:#000;"></div>
<div class="a" style="left:9px;top:268px;width:11px;height:19px;background:#ff9999;"></div>
<div class="t" style="left:27px;top:271px;font-size:11px;color:#0000ff">29.12.25</div>
<div class="a" style="left:90px;top:266px;width:100px;height:21px;overflow:hidden"><div class="t gb" style="left:3px;top:4px;color:#000">200-01</div></div>
<div class="a" style="left:191px;top:266px;width:250px;height:21px;overflow:hidden"><div class="t gb" style="left:3px;top:4px;color:#000">Gabelstapler E4566 , Flurförderzeug</div></div>
<div class="a" style="left:442px;top:266px;width:90px;height:21px;overflow:hidden"><div class="t gb" style="left:3px;top:4px;color:#000">Gst0123452</div></div>
<div class="a" style="left:533px;top:266px;width:58px;height:21px;overflow:hidden"><div class="t gb" style="left:3px;top:4px;color:#000">Fuhrpark</div></div>
<div class="a" style="left:9px;top:308px;width:583px;height:1px;background:#d4d4d4;"></div>
<div class="a" style="left:0px;top:308px;width:8px;height:1px;background:#000;"></div>
<div class="a" style="left:9px;top:289px;width:80px;height:19px;background:#ff9999;"></div>
<div class="t" style="left:27px;top:292px;font-size:11px;color:#0000ff">05.12.25</div>
<div class="a" style="left:90px;top:287px;width:100px;height:21px;overflow:hidden"><div class="t gb" style="left:3px;top:4px;color:#000">200-02</div></div>
<div class="a" style="left:191px;top:287px;width:250px;height:21px;overflow:hidden"><div class="t gb" style="left:3px;top:4px;color:#000">Gabelstapler E4566 , Flurförderzeug</div></div>
<div class="a" style="left:442px;top:287px;width:90px;height:21px;overflow:hidden"><div class="t gb" style="left:3px;top:4px;color:#000">Gst8493931</div></div>
<div class="a" style="left:533px;top:287px;width:58px;height:21px;overflow:hidden"><div class="t gb" style="left:3px;top:4px;color:#000">Fuhrpark</div></div>
<div class="a" style="left:9px;top:329px;width:583px;height:1px;background:#d4d4d4;"></div>
<div class="a" style="left:0px;top:329px;width:8px;height:1px;background:#000;"></div>
<div class="a" style="left:9px;top:310px;width:57px;height:19px;background:#99ff99;"></div>
<div class="t" style="left:27px;top:313px;font-size:11px;color:#0000ff">24.01.26</div>
<div class="a" style="left:90px;top:308px;width:100px;height:21px;overflow:hidden"><div class="t gb" style="left:3px;top:4px;color:#000">200-03</div></div>
<div class="a" style="left:191px;top:308px;width:250px;height:21px;overflow:hidden"><div class="t gb" style="left:3px;top:4px;color:#000">Gabelstapler E4566 , Flurförderzeug</div></div>
<div class="a" style="left:442px;top:308px;width:90px;height:21px;overflow:hidden"><div class="t gb" style="left:3px;top:4px;color:#000">Gst0949431</div></div>
<div class="a" style="left:533px;top:308px;width:58px;height:21px;overflow:hidden"><div class="t gb" style="left:3px;top:4px;color:#000">Fuhrpark</div></div>
<div class="a" style="left:89px;top:35px;width:1px;height:290px;background:#d4d4d4;"></div>
<div class="a" style="left:190px;top:35px;width:1px;height:290px;background:#d4d4d4;"></div>
<div class="a" style="left:441px;top:35px;width:1px;height:290px;background:#d4d4d4;"></div>
<div class="a" style="left:532px;top:35px;width:1px;height:290px;background:#d4d4d4;"></div>
<div class="a" style="left:190px;top:203px;width:1px;height:21px;background:#9cc8ea;"></div>
<div class="a" style="left:441px;top:203px;width:1px;height:21px;background:#9cc8ea;"></div>
<div class="a" style="left:532px;top:203px;width:1px;height:21px;background:#9cc8ea;"></div>
<div class="a" style="left:231px;top:205px;width:1px;height:17px;background:#ff8000;"></div>
<svg class="a" style="left:2px;top:211px" width="6" height="9" viewBox="0 0 6 9"><path d="M0.500 0.500l4.500 4-4.500 4z" fill="#000"/></svg>
<div class="a" style="left:591px;top:0px;width:1px;height:325px;background:#000;"></div>
<div class="a" style="left:592px;top:0px;width:17px;height:325px;background:#f4f4f4;background-image:repeating-conic-gradient(#fff 0 25%,#e8e8e8 0 50%);background-size:2px 2px"></div>
<div class="a" style="left:592px;top:0px;width:16px;height:15px;background:#f0f0f0;border:1px solid #fff;border-right:1px solid #696969;border-bottom:1px solid #696969;box-shadow:inset -1px -1px 0 #a0a0a0"></div>
<div class="a" style="left:592px;top:309px;width:16px;height:16px;background:#f0f0f0;border:1px solid #fff;border-right:1px solid #696969;border-bottom:1px solid #696969;box-shadow:inset -1px -1px 0 #a0a0a0"></div>
<div class="a" style="left:592px;top:36px;width:16px;height:258px;background:#f0f0f0;border:1px solid #fff;border-right:1px solid #696969;border-bottom:1px solid #696969;box-shadow:inset -1px -1px 0 #a0a0a0"></div>
<svg class="a" style="left:596px;top:4px" width="8" height="5" viewBox="0 0 8 5"><path d="M0 4.500l4-4 4 4z" fill="#000"/></svg>
<svg class="a" style="left:596px;top:315px" width="8" height="5" viewBox="0 0 8 5"><path d="M0 0.500l4 4 4-4z" fill="#000"/></svg>
<div class="a" style="left:0px;top:325px;width:592px;height:16px;background:#f4f4f4;background-image:repeating-conic-gradient(#fff 0 25%,#e8e8e8 0 50%);background-size:2px 2px"></div>
<div class="a" style="left:0px;top:325px;width:4px;height:16px;background:#000;"></div>
<div class="a" style="left:4px;top:325px;width:16px;height:16px;background:#f0f0f0;border:1px solid #fff;border-right:1px solid #696969;border-bottom:1px solid #696969;box-shadow:inset -1px -1px 0 #a0a0a0"></div>
<div class="a" style="left:21px;top:325px;width:34px;height:16px;background:#f0f0f0;border:1px solid #fff;border-right:1px solid #696969;border-bottom:1px solid #696969;box-shadow:inset -1px -1px 0 #a0a0a0"></div>
<div class="a" style="left:576px;top:325px;width:16px;height:16px;background:#f0f0f0;border:1px solid #fff;border-right:1px solid #696969;border-bottom:1px solid #696969;box-shadow:inset -1px -1px 0 #a0a0a0"></div>
<div class="a" style="left:592px;top:325px;width:17px;height:16px;background:#f0f0f0;"></div>
<svg class="a" style="left:9px;top:329px" width="5" height="8" viewBox="0 0 5 8"><path d="M4.500 0l-4 4 4 4z" fill="#000"/></svg>
<svg class="a" style="left:582px;top:329px" width="5" height="8" viewBox="0 0 5 8"><path d="M0.500 0l4 4-4 4z" fill="#000"/></svg>
</div>
<div class="a" style="left:927px;top:191px;width:349px;height:347px;background:#fff"></div>
<div class="t ms" style="left:937px;top:198px;color:#000;">Objekt:</div>
<div class="t ms" style="left:938px;top:213px;color:#000;">Typ</div>
<div class="t ms" style="left:937px;top:230px;color:#000;">Gruppe:</div>
<div class="t ms" style="left:936px;top:244px;color:#000;">Ort:</div>
<div class="t ms" style="left:936px;top:259px;color:#000;">Kostenstelle:</div>
<div class="t ms" style="left:936px;top:274px;color:#000;">Interne-Nr:</div>
<div class="t ms" style="left:936px;top:289px;color:#000;">Neu-Datum:</div>
<div class="t ms" style="left:936px;top:304px;color:#000;">Ende-Datum:</div>
<div class="t ms" style="left:936px;top:319px;color:#000;">Neupreis:</div>
<div class="t ms" style="left:936px;top:334px;color:#000;">Nächste Bericht:</div>
<div class="t ms" style="left:1037px;top:200px;color:#0000ff;">Elektrohubwagen Baka 1000 kg</div>
<div class="t ms" style="left:1037px;top:214px;color:#0000ff;">Fuhrpark</div>
<div class="t ms" style="left:1037px;top:230px;color:#0000ff;letter-spacing:-0.3px;">Fuhrpark-Flurförderfahrzeuge</div>
<div class="t ms" style="left:1036px;top:244px;color:#0000ff;letter-spacing:-0.2px;">2.2. Halle Fertigungsbereich</div>
<div class="t ms" style="left:1036px;top:259px;color:#0000ff;">3000 Vertrieb</div>
<div class="t ms" style="left:1036px;top:274px;color:#0000ff;">Baka</div>
<div class="t ms" style="left:1037px;top:289px;color:#0000ff;">26.04.2015</div>
<div class="t ms" style="left:1043px;top:304px;color:#0000ff;">.&nbsp;&nbsp;.</div>
<div class="t ms" style="left:1036px;top:319px;color:#0000ff;">4351,00</div>
<div class="t ms" style="left:1036px;top:334px;color:#0000ff;">22.07.2026</div>
<div class="t ms" style="left:936px;top:448px;color:#000;">Zusatzfeld 1:</div>
<div class="t ms" style="left:936px;top:463px;color:#000;">Zusatzfeld 2:</div>
<div class="t ms" style="left:936px;top:478px;color:#000;">Zusatzfeld 3:</div>
<div class="t ms" style="left:936px;top:493px;color:#000;">Zusatzfeld 4:</div>
<div class="t ms" style="left:936px;top:508px;color:#000;">Zusatzfeld 5:</div>
<div class="t ms" style="left:1037px;top:448px;color:#0000ff;">Bereich B</div>
<div class="t ms" style="left:1037px;top:463px;color:#0000ff;letter-spacing:-0.3px;">Einsatzbereit = JA</div>
<div class="a" style="left:1236px;top:202px;width:24px;height:26px;background:#f0f0f0;border-top:1px solid #fff;border-left:1px solid #fff;border-right:2px solid #6d6d6d;border-bottom:2px solid #6d6d6d"></div>
<div class="t" style="left:1240px;top:208px;font-size:12px;font-weight:bold;letter-spacing:-0.3px">&gt;&gt;</div>
<svg class="a" style="left:943px;top:353px" width="21" height="32" viewBox="0 0 21 32"><path d="M2 0h12l7 7v23a2 2 0 0 1-2 2h-17a2 2 0 0 1-2-2v-28a2 2 0 0 1 2-2z" fill="#4285f4"/><path d="M14 0l7 7h-5a2 2 0 0 1-2-2z" fill="#a1c2fa"/><path d="M14 7h7v5z" fill="#3b74d9"/><path d="M4.500 14.500h11.500M4.500 17.500h11.500M4.500 20.500h11.500M4.500 23.500h7" stroke="#f1f5fd" stroke-width="1.600"/></svg>
<svg class="a" style="left:940px;top:390px" width="25" height="32" viewBox="0 0 25 32"><rect width="25" height="32" fill="#d0161f"/><path d="M6 2h11l4 4v22a2 2 0 0 1-2 2h-13a2 2 0 0 1-2-2v-24a2 2 0 0 1 2-2z" fill="none" stroke="#fff" stroke-width="1.200"/><path d="M17.500 2.500c0 2 1.500 3.500 3.500 3.500" stroke="#fff" stroke-width="1.600" fill="none"/><text x="6.500" y="10" font-family="Liberation Sans" font-weight="bold" font-size="6.500" fill="#fff" letter-spacing="0.200">PDF</text><path d="M9.500 22.500l5-5.500 1.800 1.500-5 5.500z" fill="none" stroke="#fff" stroke-width="1.300"/><path d="M8.500 24l1-1.500" stroke="#fff" stroke-width="1.200"/><path d="M8 26.200h8" stroke="#f08a90" stroke-width="0.700"/></svg>
<svg class="a" style="left:970px;top:390px" width="25" height="32" viewBox="0 0 25 32"><rect width="25" height="32" fill="#d0161f"/><path d="M6 2h11l4 4v22a2 2 0 0 1-2 2h-13a2 2 0 0 1-2-2v-24a2 2 0 0 1 2-2z" fill="none" stroke="#fff" stroke-width="1.200"/><path d="M17.500 2.500c0 2 1.500 3.500 3.500 3.500" stroke="#fff" stroke-width="1.600" fill="none"/><text x="6.500" y="10" font-family="Liberation Sans" font-weight="bold" font-size="6.500" fill="#fff" letter-spacing="0.200">PDF</text><path d="M9.500 22.500l5-5.500 1.800 1.500-5 5.500z" fill="none" stroke="#fff" stroke-width="1.300"/><path d="M8.500 24l1-1.500" stroke="#fff" stroke-width="1.200"/><path d="M8 26.200h8" stroke="#f08a90" stroke-width="0.700"/></svg>
<svg class="a" style="left:1000px;top:390px" width="25" height="32" viewBox="0 0 25 32"><rect width="25" height="32" fill="#d0161f"/><path d="M6 2h11l4 4v22a2 2 0 0 1-2 2h-13a2 2 0 0 1-2-2v-24a2 2 0 0 1 2-2z" fill="none" stroke="#fff" stroke-width="1.200"/><path d="M17.500 2.500c0 2 1.500 3.500 3.500 3.500" stroke="#fff" stroke-width="1.600" fill="none"/><text x="6.500" y="10" font-family="Liberation Sans" font-weight="bold" font-size="6.500" fill="#fff" letter-spacing="0.200">PDF</text><path d="M9.500 22.500l5-5.500 1.800 1.500-5 5.500z" fill="none" stroke="#fff" stroke-width="1.300"/><path d="M8.500 24l1-1.500" stroke="#fff" stroke-width="1.200"/><path d="M8 26.200h8" stroke="#f08a90" stroke-width="0.700"/></svg>
<svg class="a" style="left:1028px;top:391px" width="28" height="29" viewBox="0 0 28 29"><defs><clipPath id="mp"><rect x="0.500" y="0.500" width="27" height="28" rx="5"/></clipPath></defs><g clip-path="url(#mp)"><rect width="28" height="29" fill="#d9d7cf"/><rect x="0" y="7" width="28" height="3.500" fill="#f2c12e"/><rect x="5" y="0" width="3.500" height="29" fill="#f4e26a"/><path d="M14 10v19M19 10v19M23 10v19M9 17h19M9 23h19" stroke="#f5f4ee" stroke-width="1.600"/><rect x="5.500" y="15" width="3" height="4" fill="#c8281e"/><rect x="5.500" y="21" width="3" height="3" fill="#7a9a3a"/><path d="M12.500 3h12.500v7c0 3-3 4-6.200 5.500-3.300-1.500-6.300-2.500-6.300-5.500z" fill="#2a56c8"/><path d="M12.500 3h12.500v2.500h-12.500z" fill="#d83030"/><text x="18.700" y="11.500" font-family="Liberation Sans" font-weight="bold" font-size="5.500" fill="#fff" text-anchor="middle">280</text></g><rect x="0.500" y="0.500" width="27" height="28" rx="5" fill="none" stroke="#bdbab0" stroke-width="0.800"/></svg>
<svg class="a" style="left:1063px;top:390px" width="21" height="32" viewBox="0 0 21 32"><path d="M2 0h12l7 7v23a2 2 0 0 1-2 2h-17a2 2 0 0 1-2-2v-28a2 2 0 0 1 2-2z" fill="#4285f4"/><path d="M14 0l7 7h-5a2 2 0 0 1-2-2z" fill="#a1c2fa"/><path d="M14 7h7v5z" fill="#3b74d9"/><path d="M4.500 14.500h11.500M4.500 17.500h11.500M4.500 20.500h11.500M4.500 23.500h7" stroke="#f1f5fd" stroke-width="1.600"/></svg>
<div class="a" style="left:1261px;top:191px;width:15px;height:328px;background:#f6f6f6"></div>
<div class="a" style="left:1262px;top:193px;width:13px;height:15px;background:linear-gradient(90deg,#c9d8fb,#bccef8 50%,#b4c8f6);border:1px solid #9db4ee;border-radius:3px;box-shadow:0 0 0 1px #fff"></div>
<div class="a" style="left:1262px;top:210px;width:13px;height:71px;background:linear-gradient(90deg,#c9d8fb,#bccef8 50%,#b4c8f6);border:1px solid #9db4ee;border-radius:3px;box-shadow:0 0 0 1px #fff"></div>
<div class="a" style="left:1262px;top:503px;width:13px;height:15px;background:linear-gradient(90deg,#c9d8fb,#bccef8 50%,#b4c8f6);border:1px solid #9db4ee;border-radius:3px;box-shadow:0 0 0 1px #fff"></div>
<svg class="a" style="left:1264px;top:197px" width="9" height="7" viewBox="0 0 9 7"><path d="M1 5.500l3.500-3.500 3.500 3.500" stroke="#4d6185" stroke-width="1.800" fill="none"/></svg>
<svg class="a" style="left:1264px;top:507px" width="9" height="7" viewBox="0 0 9 7"><path d="M1 1.500l3.500 3.500 3.500-3.500" stroke="#4d6185" stroke-width="1.800" fill="none"/></svg>
<div class="a" style="left:1265px;top:241px;width:7px;height:7px;background:repeating-linear-gradient(#eef3ff 0 1px,#8fa8e8 1px 2px)"></div>
<div class="a" style="left:928px;top:520px;width:332px;height:17px;background:#f6f6f2"></div>
<div class="a" style="left:931px;top:521px;width:14px;height:14px;background:linear-gradient(90deg,#c9d8fb,#bccef8 50%,#b4c8f6);border:1px solid #9db4ee;border-radius:3px;box-shadow:0 0 0 1px #fff"></div>
<div class="a" style="left:947px;top:521px;width:71px;height:14px;background:linear-gradient(90deg,#c9d8fb,#bccef8 50%,#b4c8f6);border:1px solid #9db4ee;border-radius:3px;box-shadow:0 0 0 1px #fff"></div>
<div class="a" style="left:1244px;top:521px;width:14px;height:14px;background:linear-gradient(90deg,#c9d8fb,#bccef8 50%,#b4c8f6);border:1px solid #9db4ee;border-radius:3px;box-shadow:0 0 0 1px #fff"></div>
<svg class="a" style="left:934px;top:523px" width="7" height="10" viewBox="0 0 7 10"><path d="M5.500 1l-3.500 4 3.500 4" stroke="#4d6185" stroke-width="1.800" fill="none"/></svg>
<svg class="a" style="left:1248px;top:523px" width="7" height="10" viewBox="0 0 7 10"><path d="M1.500 1l3.500 4-3.500 4" stroke="#4d6185" stroke-width="1.800" fill="none"/></svg>
<div class="a" style="left:979px;top:525px;width:7px;height:7px;background:repeating-linear-gradient(90deg,#eef3ff 0 1px,#8fa8e8 1px 2px)"></div>
<svg class="a" style="left:1139px;top:287px" width="114" height="152" viewBox="0 0 114 152">
<defs><filter id="bl" x="-5%" y="-5%" width="110%" height="110%"><feGaussianBlur stdDeviation="0.900"/></filter>
<linearGradient id="flr" x1="0" y1="0" x2="1" y2="0.300"><stop offset="0" stop-color="#8b8d88"/><stop offset="0.500" stop-color="#a3a6a2"/><stop offset="1" stop-color="#b7bab8"/></linearGradient>
<clipPath id="pc"><rect width="114" height="152"/></clipPath></defs>
<g clip-path="url(#pc)"><g filter="url(#bl)">
<rect x="-3" y="-3" width="120" height="70" fill="#2a2620"/>
<rect x="-3" y="60" width="120" height="95" fill="url(#flr)"/>
<path d="M66 60h50v12l-50-2z" fill="#a9b4c2"/>
<rect x="0" y="0" width="9" height="12" fill="#4f9a88"/>
<rect x="14" y="0" width="16" height="17" fill="#6d655c"/>
<rect x="32" y="6" width="28" height="14" fill="#4a5a34"/>
<rect x="40" y="11" width="7" height="6" fill="#d8d8d0"/><rect x="52" y="11" width="6" height="6" fill="#d8d8d0"/>
<rect x="63" y="5" width="11" height="18" fill="#8a7a6a"/><rect x="66" y="10" width="4" height="4" fill="#e4e4e4"/>
<rect x="74" y="0" width="6" height="66" fill="#3a3328"/>
<rect x="79" y="10" width="36" height="41" fill="#dce9f8"/>
<path d="M79 22h36M79 31h36M79 41h36" stroke="#7f8fa8" stroke-width="1.200"/>
<path d="M87 10v41M99 10v41M107 10v41" stroke="#2b2d38" stroke-width="3.500"/>
<rect x="92" y="12" width="5" height="30" fill="#2b2d38"/>
<rect x="80" y="50" width="35" height="12" fill="#8a8c8e"/>
<rect x="82" y="47" width="14" height="8" fill="#b03030"/><rect x="82" y="54" width="16" height="6" fill="#c8ccd0"/>
<rect x="100" y="50" width="14" height="11" fill="#a0a4a8"/>
<rect x="76" y="34" width="5" height="29" fill="#d8c43a"/>
<rect x="73.500" y="27" width="2.200" height="39" fill="#2a58b8"/>
<rect x="0" y="17" width="74" height="3.500" fill="#c9502a"/>
<rect x="0" y="42" width="74" height="3" fill="#c9502a"/>
<rect x="0" y="46" width="13" height="4" fill="#d05a30"/>
<rect x="0" y="30" width="4" height="14" fill="#b8a890"/><rect x="15" y="37" width="16" height="5" fill="#a08868"/>
<rect x="11" y="17" width="2.400" height="40" fill="#2a4fa8"/>
<rect x="0" y="51" width="11" height="19" fill="#d9bca0"/><rect x="0" y="68" width="11" height="2" fill="#2a58b8"/>
<rect x="26" y="52" width="6" height="18" fill="#3a66b8"/>
<rect x="66" y="46" width="7" height="7" fill="#d8d8d8"/><rect x="66" y="54" width="7" height="7" fill="#2a3a58"/>
<!-- shadows -->
<path d="M62 120l40-8 6 6-44 14z" fill="#6a6c68" opacity="0.600"/>
<!-- yellow line -->
<path d="M0 128l18-5M62 108l52-18" stroke="#e8c830" stroke-width="2"/>
<path d="M64 91l50 24" stroke="#7a7c78" stroke-width="0.800"/>
<!-- forklift -->
<rect x="31.500" y="31" width="20" height="48" fill="#3a1c14"/>
<rect x="32" y="31" width="4" height="48" fill="#b83a20"/><rect x="38.500" y="31" width="3" height="48" fill="#8a2a18"/><rect x="44" y="31" width="3.500" height="48" fill="#a8321c"/>
<rect x="33" y="64" width="18" height="3" fill="#a8321c"/>
<rect x="23" y="21" width="43" height="10.500" fill="#c8401f"/>
<path d="M23 25l43-4v4l-43 4z" fill="#d9502a" opacity="0.700"/>
<rect x="52" y="21" width="13.500" height="103" fill="#c63c1e"/>
<rect x="52" y="21" width="4" height="103" fill="#b03218"/>
<rect x="59" y="59" width="3" height="14" fill="#e8d040"/><rect x="59" y="59" width="3" height="6" fill="#f0f0e8"/>
<rect x="58.500" y="47" width="5" height="7" fill="#e0e0e0"/><rect x="58.500" y="51" width="5" height="3" fill="#444"/>
<circle cx="61" cy="38" r="2.500" fill="#e8e0d8"/>
<path d="M62 105l22-3.500 1.500 2-22.500 9z" fill="#7a4a40"/><path d="M63 112.500l22.500-9v3l-22 9.500z" fill="#c8401f"/>
<path d="M62 116l36-7 2.500 2.500-38 12z" fill="#74443a"/><path d="M62.500 123.500l38-12v3.500l-38 13z" fill="#c8401f"/>
<path d="M27 80l24-3v46l-24 1z" fill="#c63a1c"/>
<path d="M27 80l8-3.500 16 0.500-8 4z" fill="#5a5a52"/>
<path d="M43 80l9-3.500v45l-9 2z" fill="#b83218"/>
<circle cx="44.500" cy="93" r="6.700" fill="#1c1a18"/><rect x="42" y="91" width="5.500" height="4" fill="#d8d8d0"/><circle cx="44" cy="90" r="1" fill="#d83a2a"/>
<rect x="39" y="100.500" width="12" height="20" fill="#1c1a18"/>
<path d="M26 120l36-3v24l-28 3-6-6z" fill="#c8401f"/>
<path d="M26 120l36-3v4l-36 4z" fill="#d9562c"/>
<rect x="24" y="140" width="10" height="11" fill="#c63a1c"/>
<path d="M9 107l18-1v20l-14 2z" fill="#c8401f"/><rect x="6.500" y="119" width="7" height="8" fill="#b8341a"/>
<rect x="20" y="103" width="5" height="20" fill="#b8341a"/>
<rect x="14" y="121" width="14" height="18" rx="2" fill="#1e1e1e"/>
<rect x="16" y="93" width="2.500" height="28" fill="#2a1a18"/>
<path d="M10 57l9-1 2 37h-7z" fill="#3a3230"/>
<path d="M19 78l8-1 1.500 33-6 1z" fill="#4a4440"/>
<circle cx="16.500" cy="63" r="4" fill="#c8201c"/><path d="M19 64l6 3.500" stroke="#c8c8c8" stroke-width="1.500"/>
<rect x="12" y="53" width="6" height="4" fill="#b82a20"/>
</g></g></svg>
<div class="a" style="left:13px;top:539px;width:277px;height:51px;background:#d9e4f5"></div>
<div class="a" style="left:290px;top:539px;width:25px;height:51px;background:#f0f0f0;border-right:1px solid #696969"></div>
<div class="a" style="left:290px;top:539px;width:25px;height:26px;border:1px solid;border-color:#fff #696969 #fff #fff"></div>
<div class="a" style="left:290px;top:565px;width:25px;height:25px;border:1px solid;border-color:#fff #696969 #696969 #fff"></div>
<svg class="a" style="left:298px;top:548px" width="9" height="9" viewBox="0 0 9 9" shape-rendering="crispEdges"><path d="M3.500 0.500h2v3h3v2h-3v3h-2v-3h-3v-2h3z" fill="#fff" stroke="#000" stroke-width="1"/></svg>
<svg class="a" style="left:298px;top:575px" width="9" height="5" viewBox="0 0 9 5"><rect x="0.500" y="0.500" width="8" height="3" fill="#fff" stroke="#000"/></svg>
<div class="a" style="left:24px;top:541px;width:123px;height:21px;background:#fff;border:1px solid;border-color:#8a8a8a #fff #fff #8a8a8a;box-shadow:inset 1px 1px 0 #696969"></div>
<div class="a" style="left:129px;top:543px;width:16px;height:17px;background:#f0f0f0;border:1px solid;border-color:#fff #696969 #696969 #fff;box-shadow:inset -1px -1px 0 #a0a0a0"></div>
<svg class="a" style="left:133px;top:549px" width="8" height="5" viewBox="0 0 8 5"><path d="M0.500 0.500h7l-3.500 4z" fill="#000"/></svg>
<div class="a" style="left:29px;top:543px;width:99px;height:17px;overflow:hidden"><div class="t" style="left:0;top:4px;font-size:12px">Typ</div></div>
<div class="a" style="left:24px;top:565px;width:123px;height:21px;background:#fff;border:1px solid;border-color:#8a8a8a #fff #fff #8a8a8a;box-shadow:inset 1px 1px 0 #696969"></div>
<div class="a" style="left:129px;top:567px;width:16px;height:17px;background:#f0f0f0;border:1px solid;border-color:#fff #696969 #696969 #fff;box-shadow:inset -1px -1px 0 #a0a0a0"></div>
<svg class="a" style="left:133px;top:573px" width="8" height="5" viewBox="0 0 8 5"><path d="M0.500 0.500h7l-3.500 4z" fill="#000"/></svg>
<div class="a" style="left:29px;top:567px;width:99px;height:17px;overflow:hidden"><div class="t" style="left:0;top:4px;font-size:12px">Gruppe</div></div>
<div class="a" style="left:160px;top:541px;width:124px;height:21px;background:#fff;border:1px solid;border-color:#8a8a8a #fff #fff #8a8a8a;box-shadow:inset 1px 1px 0 #696969"></div>
<div class="a" style="left:266px;top:543px;width:16px;height:17px;background:#f0f0f0;border:1px solid;border-color:#fff #696969 #696969 #fff;box-shadow:inset -1px -1px 0 #a0a0a0"></div>
<svg class="a" style="left:270px;top:549px" width="8" height="5" viewBox="0 0 8 5"><path d="M0.500 0.500h7l-3.500 4z" fill="#000"/></svg>
<div class="a" style="left:165px;top:543px;width:100px;height:17px;overflow:hidden"><div class="t" style="left:0;top:4px;font-size:12px">Ort</div></div>
<div class="a" style="left:160px;top:565px;width:124px;height:21px;background:#fff;border:1px solid;border-color:#8a8a8a #fff #fff #8a8a8a;box-shadow:inset 1px 1px 0 #696969"></div>
<div class="a" style="left:266px;top:567px;width:16px;height:17px;background:#f0f0f0;border:1px solid;border-color:#fff #696969 #696969 #fff;box-shadow:inset -1px -1px 0 #a0a0a0"></div>
<svg class="a" style="left:270px;top:573px" width="8" height="5" viewBox="0 0 8 5"><path d="M0.500 0.500h7l-3.500 4z" fill="#000"/></svg>
<div class="a" style="left:165px;top:567px;width:100px;height:17px;overflow:hidden"><div class="t" style="left:0;top:4px;font-size:12px">ohne Gruppierung</div></div>
<div class="t" style="left:15px;top:546px;font-size:12px;font-weight:bold">1.</div>
<div class="t" style="left:15px;top:569px;font-size:12px;font-weight:bold">2.</div>
<div class="t" style="left:150px;top:546px;font-size:12px;font-weight:bold">3.</div>
<div class="t" style="left:150px;top:569px;font-size:12px;font-weight:bold">4.</div>
<div class="a" style="left:315px;top:539px;width:963px;height:52px;background:#dbe5f4;border-bottom:2px solid #8a8a8a"></div>
<div class="a" style="left:315px;top:539px;width:1px;height:52px;background:#f0f0f0"></div>
<div class="a" style="left:317px;top:565px;width:25px;height:25px;background:#f0f0f0;border:1px solid;border-color:#fff #696969 #696969 #fff;box-shadow:inset -1px -1px 0 #a0a0a0"></div>
<svg class="a" style="left:321px;top:570px" width="17" height="17" viewBox="0 0 17 17"><defs><linearGradient id="cb" x1="0" y1="0" x2="0" y2="1"><stop offset="0" stop-color="#eef4ff"/><stop offset="1" stop-color="#b8ccf4"/></linearGradient></defs><rect x="0.500" y="0.500" width="16" height="16" rx="4" fill="url(#cb)" stroke="#9db4e4"/><path d="M5 4.500l3.500 3.200 3.500-3.200M5 8.800l3.500 3.200 3.500-3.200" stroke="#1a2a8a" stroke-width="1.200" fill="none"/></svg>
<div class="a" style="left:354px;top:541px;width:128px;height:21px;background:#fff;border:1px solid;border-color:#8a8a8a #fff #fff #8a8a8a;box-shadow:inset 1px 1px 0 #696969"></div>
<div class="a" style="left:464px;top:543px;width:16px;height:17px;background:#f0f0f0;border:1px solid;border-color:#fff #696969 #696969 #fff;box-shadow:inset -1px -1px 0 #a0a0a0"></div>
<svg class="a" style="left:468px;top:549px" width="8" height="5" viewBox="0 0 8 5"><path d="M0.500 0.500h7l-3.500 4z" fill="#000"/></svg>
<div class="a" style="left:359px;top:543px;width:104px;height:17px;overflow:hidden"><div class="t" style="left:0;top:4px;font-size:12px">Bezeichnung</div></div>
<div class="a" style="left:354px;top:564px;width:128px;height:21px;background:#fff;border:1px solid;border-color:#8a8a8a #fff #fff #8a8a8a;box-shadow:inset 1px 1px 0 #696969"></div>
<div class="a" style="left:464px;top:566px;width:16px;height:17px;background:#f0f0f0;border:1px solid;border-color:#fff #696969 #696969 #fff;box-shadow:inset -1px -1px 0 #a0a0a0"></div>
<svg class="a" style="left:468px;top:572px" width="8" height="5" viewBox="0 0 8 5"><path d="M0.500 0.500h7l-3.500 4z" fill="#000"/></svg>
<div class="a" style="left:359px;top:566px;width:104px;height:17px;overflow:hidden"><div class="t" style="left:0;top:4px;font-size:12px">Obj-Nr</div></div>
<div class="t" style="left:450px;width:100px;text-align:right;top:544px;font-size:16px;color:#000080;letter-spacing:1.5px;text-shadow:0.4px 0 0 #000080">16</div>
<div class="t" style="left:450px;width:100px;text-align:right;top:566px;font-size:16px;color:#000080;letter-spacing:1.5px;text-shadow:0.4px 0 0 #000080">198</div>
<svg class="a" style="left:1230px;top:542px" width="46" height="46" viewBox="0 0 46 46"><circle cx="22.700" cy="22.600" r="22.400" fill="#8cc63f"/><path d="M7.800 36.500c0-7 2.500-10 8-12l2.500-2h5.500l2.500 2c5.500 2 7.700 5 7.700 12-4 2.300-9 2.800-13 2.800s-9.200-0.500-13.200-2.800z" fill="#fff"/><ellipse cx="20.800" cy="14.600" rx="6.200" ry="8.700" fill="#8cc63f" stroke="#fff" stroke-width="0.900"/><circle cx="30.700" cy="32.500" r="6.600" fill="#8cc63f" stroke="#fff" stroke-width="0.900"/><path d="M27.300 32.500l2.600 2.600 4.700-5.200" stroke="#fff" stroke-width="1.200" fill="none"/><text x="18.300" y="35.300" font-family="Liberation Sans" font-weight="bold" font-size="12" fill="#000" text-anchor="middle">1</text></svg>
<div class="a" style="left:12px;top:590px;width:301px;height:338px;background:#fff;border:1px solid #6d6d6d;border-top:2px solid #6d6d6d"></div>
<div class="a" style="left:18px;top:597px;width:290px;height:24px;background:#0a3793"></div>
<div class="t" style="left:18.500px;top:599px;font-size:12px;font-weight:bold;color:#fff">300-1104 Elektrohubwagen Baka 1000 kg</div>
<div class="a" style="left:18px;top:624px;width:288px;height:27px;background:#ebebeb"></div>
<svg class="a" style="left:21px;top:629px" width="19" height="19" viewBox="0 0 19 19"><defs><linearGradient id="ib0" x1="0" y1="0" x2="0" y2="1"><stop offset="0" stop-color="#6f94dc"/><stop offset="0.500" stop-color="#3f68c0"/><stop offset="1" stop-color="#2a4ea4"/></linearGradient></defs><rect x="0.500" y="0.500" width="18" height="18" rx="2.500" fill="url(#ib0)" stroke="#2a4a98"/><rect x="5" y="6" width="8" height="9" fill="none" stroke="#e8eefc" stroke-width="0.900"/><rect x="6.500" y="4" width="8" height="9.500" fill="#4a72c8" stroke="#fff" stroke-width="0.900"/><path d="M11 10l1.300 1.300 2.200-2.500" stroke="#fff" stroke-width="0.900" fill="none"/></svg>
<div class="t" style="left:43.5px;top:632px;font-size:13px;color:#24508f;letter-spacing:0px">Berichte / Aufgaben zum Objekt</div>
<div class="a" style="left:18px;top:654px;width:288px;height:27px;background:#ebebeb"></div>
<svg class="a" style="left:21px;top:659px" width="19" height="19" viewBox="0 0 19 19"><defs><linearGradient id="ib1" x1="0" y1="0" x2="0" y2="1"><stop offset="0" stop-color="#6f94dc"/><stop offset="0.500" stop-color="#3f68c0"/><stop offset="1" stop-color="#2a4ea4"/></linearGradient></defs><rect x="0.500" y="0.500" width="18" height="18" rx="2.500" fill="url(#ib1)" stroke="#2a4a98"/><rect x="5" y="6" width="8" height="9" fill="none" stroke="#e8eefc" stroke-width="0.900"/><rect x="6.500" y="4" width="8" height="9.500" fill="#4a72c8" stroke="#fff" stroke-width="0.900"/><path d="M11 10l1.300 1.300 2.200-2.500" stroke="#fff" stroke-width="0.900" fill="none"/></svg>
<div class="t" style="left:43.5px;top:662px;font-size:13px;color:#24508f;letter-spacing:-0.35px">Gefährdungsbeurteilung</div>
<div class="a" style="left:18px;top:684px;width:288px;height:27px;background:#ebebeb"></div>
<svg class="a" style="left:21px;top:689px" width="19" height="19" viewBox="0 0 19 19"><defs><linearGradient id="ib2" x1="0" y1="0" x2="0" y2="1"><stop offset="0" stop-color="#6f94dc"/><stop offset="0.500" stop-color="#3f68c0"/><stop offset="1" stop-color="#2a4ea4"/></linearGradient></defs><rect x="0.500" y="0.500" width="18" height="18" rx="2.500" fill="url(#ib2)" stroke="#2a4a98"/><rect x="5" y="6" width="8" height="9" fill="none" stroke="#e8eefc" stroke-width="0.900"/><rect x="6.500" y="4" width="8" height="9.500" fill="#4a72c8" stroke="#fff" stroke-width="0.900"/><path d="M11 10l1.300 1.300 2.200-2.500" stroke="#fff" stroke-width="0.900" fill="none"/></svg>
<div class="t" style="left:43.5px;top:692px;font-size:13px;color:#24508f;letter-spacing:-0.1px">Betriebsdaten</div>
<div class="a" style="left:18px;top:714px;width:288px;height:27px;background:#ebebeb"></div>
<svg class="a" style="left:21px;top:719px" width="19" height="19" viewBox="0 0 19 19"><defs><linearGradient id="ib3" x1="0" y1="0" x2="0" y2="1"><stop offset="0" stop-color="#6f94dc"/><stop offset="0.500" stop-color="#3f68c0"/><stop offset="1" stop-color="#2a4ea4"/></linearGradient></defs><rect x="0.500" y="0.500" width="18" height="18" rx="2.500" fill="url(#ib3)" stroke="#2a4a98"/><rect x="5" y="6" width="8" height="9" fill="none" stroke="#e8eefc" stroke-width="0.900"/><rect x="6.500" y="4" width="8" height="9.500" fill="#4a72c8" stroke="#fff" stroke-width="0.900"/><path d="M11 10l1.300 1.300 2.200-2.500" stroke="#fff" stroke-width="0.900" fill="none"/></svg>
<div class="t" style="left:43.5px;top:722px;font-size:13px;color:#24508f;letter-spacing:0px">Messdaten der Prüfmittel</div>
<div class="a" style="left:18px;top:744px;width:288px;height:27px;background:#ebebeb"></div>
<svg class="a" style="left:21px;top:749px" width="19" height="19" viewBox="0 0 19 19"><defs><linearGradient id="ib4" x1="0" y1="0" x2="0" y2="1"><stop offset="0" stop-color="#6f94dc"/><stop offset="0.500" stop-color="#3f68c0"/><stop offset="1" stop-color="#2a4ea4"/></linearGradient></defs><rect x="0.500" y="0.500" width="18" height="18" rx="2.500" fill="url(#ib4)" stroke="#2a4a98"/><rect x="5" y="6" width="8" height="9" fill="none" stroke="#e8eefc" stroke-width="0.900"/><rect x="6.500" y="4" width="8" height="9.500" fill="#4a72c8" stroke="#fff" stroke-width="0.900"/><path d="M11 10l1.300 1.300 2.200-2.500" stroke="#fff" stroke-width="0.900" fill="none"/></svg>
<div class="t" style="left:44px;top:752px;font-size:13px;color:#24508f;letter-spacing:0px">Memo</div>
<div class="a" style="left:18px;top:774px;width:288px;height:27px;background:#ebebeb"></div>
<svg class="a" style="left:21px;top:779px" width="19" height="19" viewBox="0 0 19 19"><defs><linearGradient id="ib5" x1="0" y1="0" x2="0" y2="1"><stop offset="0" stop-color="#6f94dc"/><stop offset="0.500" stop-color="#3f68c0"/><stop offset="1" stop-color="#2a4ea4"/></linearGradient></defs><rect x="0.500" y="0.500" width="18" height="18" rx="2.500" fill="url(#ib5)" stroke="#2a4a98"/><rect x="5" y="6" width="8" height="9" fill="none" stroke="#e8eefc" stroke-width="0.900"/><rect x="6.500" y="4" width="8" height="9.500" fill="#4a72c8" stroke="#fff" stroke-width="0.900"/><path d="M11 10l1.300 1.300 2.200-2.500" stroke="#fff" stroke-width="0.900" fill="none"/></svg>
<div class="t" style="left:44px;top:782px;font-size:13px;color:#24508f;letter-spacing:-0.27px">Dateianhänge / Querverweise</div>
<div class="a" style="left:18px;top:804px;width:288px;height:27px;background:#ebebeb"></div>
<svg class="a" style="left:21px;top:809px" width="19" height="19" viewBox="0 0 19 19"><defs><linearGradient id="ib6" x1="0" y1="0" x2="0" y2="1"><stop offset="0" stop-color="#6f94dc"/><stop offset="0.500" stop-color="#3f68c0"/><stop offset="1" stop-color="#2a4ea4"/></linearGradient></defs><rect x="0.500" y="0.500" width="18" height="18" rx="2.500" fill="url(#ib6)" stroke="#2a4a98"/><rect x="5" y="6" width="8" height="9" fill="none" stroke="#e8eefc" stroke-width="0.900"/><rect x="6.500" y="4" width="8" height="9.500" fill="#4a72c8" stroke="#fff" stroke-width="0.900"/><path d="M11 10l1.300 1.300 2.200-2.500" stroke="#fff" stroke-width="0.900" fill="none"/></svg>
<div class="t" style="left:44px;top:812px;font-size:13px;color:#24508f;letter-spacing:0px">Ressourcen zum Objekt</div>
<div class="t" style="left:291px;top:632px;font-size:12px;color:#24508f">3</div>
<div class="a" style="left:60px;top:837px;width:196px;height:88px;background:#0d3a8f;border:1px solid #3a5aa0"></div>
<div class="t" style="left:58px;width:196px;text-align:center;top:845px;font-size:16px;color:#fff;letter-spacing:-0.200px">Objekt</div>
<div class="a" style="left:82px;top:863px;width:154px;height:50px;background:#c0c0c0;border:1px solid #7a7a7a"></div>
<svg class="a" style="left:121px;top:867px" width="76" height="21" viewBox="0 0 76 21" fill="#000"><rect x="0.00" y="0" width="1.97" height="21"/><rect x="2.96" y="0" width="0.99" height="21"/><rect x="4.94" y="0" width="0.99" height="21"/><rect x="7.90" y="0" width="1.97" height="21"/><rect x="10.86" y="0" width="0.99" height="21"/><rect x="12.83" y="0" width="1.97" height="21"/><rect x="15.79" y="0" width="0.99" height="21"/><rect x="18.75" y="0" width="0.99" height="21"/><rect x="20.73" y="0" width="0.99" height="21"/><rect x="22.70" y="0" width="1.97" height="21"/><rect x="25.66" y="0" width="1.97" height="21"/><rect x="28.62" y="0" width="0.99" height="21"/><rect x="30.60" y="0" width="0.99" height="21"/><rect x="33.56" y="0" width="0.99" height="21"/><rect x="35.53" y="0" width="1.97" height="21"/><rect x="38.49" y="0" width="0.99" height="21"/><rect x="40.47" y="0" width="1.97" height="21"/><rect x="44.42" y="0" width="0.99" height="21"/><rect x="46.39" y="0" width="0.99" height="21"/><rect x="49.35" y="0" width="0.99" height="21"/><rect x="51.32" y="0" width="0.99" height="21"/><rect x="53.30" y="0" width="1.97" height="21"/><rect x="56.26" y="0" width="0.99" height="21"/><rect x="59.22" y="0" width="0.99" height="21"/><rect x="61.19" y="0" width="1.97" height="21"/><rect x="64.16" y="0" width="0.99" height="21"/><rect x="66.13" y="0" width="1.97" height="21"/><rect x="69.09" y="0" width="0.99" height="21"/><rect x="72.05" y="0" width="0.99" height="21"/><rect x="74.03" y="0" width="1.97" height="21"/></svg>
<div class="t" style="left:80.500px;width:154px;text-align:center;top:889px;font-size:21px;color:#000;letter-spacing:0.1px">300-1104</div>
<div class="a" style="left:313px;top:591px;width:963px;height:345px;background:#fff"></div>
<div class="a" style="left:1270px;top:592px;width:4px;height:336px;border-right:2px solid #6d6d6d;border-bottom:2px solid #6d6d6d;background:#fff"></div>
<div class="a" style="left:327px;top:596px;width:101px;height:22px;background:#fff;border:1px solid;border-color:#8a8a8a #fff #fff #8a8a8a;box-shadow:inset 1px 1px 0 #696969"></div>
<div class="a" style="left:410px;top:598px;width:16px;height:18px;background:#f0f0f0;border:1px solid;border-color:#fff #696969 #696969 #fff;box-shadow:inset -1px -1px 0 #a0a0a0"></div>
<svg class="a" style="left:414px;top:605px" width="8" height="5" viewBox="0 0 8 5"><path d="M0.500 0.500h7l-3.500 4z" fill="#000"/></svg>
<div class="a" style="left:332px;top:598px;width:77px;height:18px;overflow:hidden"><div class="t" style="left:0;top:4px;font-size:12px"><span style="font-size:11px;letter-spacing:-0.1px">alle Berichte</span></div></div>
<div class="a" style="left:329px;top:626px;width:12px;height:12px;background:#fff;border:1px solid;border-color:#8a8a8a #e8e8e8 #e8e8e8 #8a8a8a;box-shadow:inset 1px 1px 0 #c8c8c8"></div>
<div class="a" style="left:350px;top:622px;width:48px;height:21px;background:#fff;border:1px solid;border-color:#8a8a8a #fff #fff #8a8a8a;box-shadow:inset 1px 1px 0 #696969"></div>
<div class="a" style="left:381px;top:624px;width:15px;height:9px;background:#f0f0f0;border:1px solid;border-color:#fff #696969 #696969 #fff;box-shadow:inset -1px -1px 0 #a0a0a0"></div>
<div class="a" style="left:381px;top:633px;width:15px;height:8px;background:#f0f0f0;border:1px solid;border-color:#fff #696969 #696969 #fff;box-shadow:inset -1px -1px 0 #a0a0a0"></div>
<svg class="a" style="left:386px;top:626px" width="5" height="12" viewBox="0 0 5 12"><path d="M0 3l2.500-2.500 2.500 2.500zM0 9l2.500 2.500 2.500-2.500z" fill="#000"/></svg>
<div class="t" style="left:364px;top:627px;font-size:12px">15</div>
<svg class="a" style="left:447px;top:595px" width="35" height="28" viewBox="0 0 35 28"><path d="M0.500 0.500h27l6.500 6v21h-33.500z" fill="#fff" stroke="#9a9a9a"/><path d="M27.500 0.500v6h6.500" fill="none" stroke="#9a9a9a"/><text x="4" y="11" font-family="Liberation Sans" font-weight="bold" font-size="9" fill="#3a62b8">A</text><path d="M13 5.500h8M13 9.500h12M4 13.500h12M19 13.500h10M4 17.500h8M15 17.500h14M4 21.500h10M17 21.500h12M4 24.500h16" stroke="#e27a62" stroke-width="0.900"/><path d="M23 5.500h6M27 9.500h3" stroke="#9a9a9a" stroke-width="1.100"/></svg>
<svg class="a" style="left:517px;top:595px" width="40" height="31" viewBox="0 0 40 31"><path d="M0.500 0.500h26l6.500 6v21h-32.500z" fill="#fff" stroke="#9a9a9a"/><path d="M26.500 0.500v6h6.500" fill="none" stroke="#9a9a9a"/><path d="M4 5.500h10M17 5.500h8M4 9.500h14M21 9.500h8M4 13.500h12M19 13.500h10M4 17.500h8M15 17.500h10M4 21.500h10M4 24.500h12" stroke="#e27a62" stroke-width="0.900"/><path d="M22 28l2-5.500 11-10.500 3.500 3.500-11 10.500z" fill="#3f7fd0"/><path d="M22 28l1-2.500 1.500 1.500z" fill="#223"/></svg>
<svg class="a" style="left:594px;top:595px" width="22" height="28" viewBox="0 0 22 28"><path d="M0.500 0.500h15l6 6v21h-21z" fill="#fff" stroke="#9a9a9a"/><path d="M15.500 0.500v6h6" fill="none" stroke="#9a9a9a"/><path d="M4.500 11.500c4 3 8 7 11 12M16 10.500c-4 3.500-8 8-11.500 12.500" stroke="#d84a3a" stroke-width="2.200" fill="none" stroke-linecap="round"/></svg>
<svg class="a" style="left:662px;top:595px" width="28" height="31" viewBox="0 0 28 31"><path d="M8.500 0.500h19v25h-19z" fill="#fff" stroke="#9a9a9a"/><path d="M0.500 4.500h19v26h-19z" fill="#fff" stroke="#7a9ac8"/><path d="M3.500 8.500h13M3.500 11.500h13M3.500 14.500h13M3.500 17.500h13M3.500 20.500h13M3.500 23.500h13M3.500 26.500h13" stroke="#8ab0e0" stroke-width="1"/></svg>
<div class="t" style="left:447.5px;top:633px;font-size:12px;color:#7c7c7c;letter-spacing:0.15px">Neuer</div>
<div class="t" style="left:446px;top:647.5px;font-size:12px;color:#7c7c7c;letter-spacing:0.15px">Bericht</div>
<div class="t" style="left:503.5px;top:633px;font-size:12px;color:#7c7c7c;letter-spacing:0.15px">Bearbeiten</div>
<div class="t" style="left:579.5px;top:633px;font-size:12px;color:#7c7c7c;letter-spacing:0.15px">Löschen</div>
<div class="t" style="left:642px;top:633px;font-size:12px;color:#7c7c7c;letter-spacing:0.15px">Duplizieren</div>
<svg class="a" style="left:708px;top:594px" width="20" height="18"><use href="#printer"/></svg>
<svg class="a" style="left:708px;top:618px" width="20" height="18"><use href="#printer"/></svg>
<div class="t" style="left:733px;top:598.5px;font-size:12px;color:#7c7c7c;letter-spacing:0.15px">Druck (Einzeln)</div>
<div class="t" style="left:734px;top:622.5px;font-size:12px;color:#7c7c7c;letter-spacing:0.15px">Druck (Selektion)</div>
<svg class="a" style="left:831px;top:593px" width="20" height="20" viewBox="0 0 20 20"><rect width="20" height="20" fill="#0a3a9a"/><rect x="9.500" y="5" width="8.500" height="9.500" fill="#fff"/><path d="M9.500 5.500l4.200 3.500 4.200-3.500" stroke="#0a3a9a" stroke-width="1" fill="none"/><rect x="2" y="3.500" width="9" height="12.500" fill="#0a3a9a"/><ellipse cx="6.500" cy="9.800" rx="2.400" ry="3.300" fill="none" stroke="#fff" stroke-width="1.800"/></svg>
<svg class="a" style="left:831px;top:618px" width="19" height="18"><use href="#grid"/></svg>
<div class="t" style="left:856px;top:598.5px;font-size:12px;color:#7c7c7c;letter-spacing:0.15px">Outlook-Transfer</div>
<div class="t" style="left:856px;top:622.5px;font-size:12px;color:#7c7c7c;letter-spacing:0.15px">Betriebsdaten</div>
<div class="a" style="left:957px;top:597px;width:12px;height:12px;background:#fff;border:1px solid;border-color:#8a8a8a #e8e8e8 #e8e8e8 #8a8a8a;box-shadow:inset 1px 1px 0 #c8c8c8"></div>
<div class="t" style="left:973px;top:598.5px;font-size:12px;color:#7c7c7c;letter-spacing:0.15px">Prognose</div>
<div class="a" style="left:318px;top:665px;width:950px;height:247px;background:#fff;border-top:2px solid #000;border-left:1px solid #000"></div>
<div class="a" style="left:319px;top:667px;width:949px;height:16px;background:#f0f0f0"></div>
<div class="a" style="left:319px;top:683px;width:949px;height:1px;background:#000"></div>
<div class="a" style="left:358px;top:667px;width:1px;height:16px;background:#000"></div>
<div class="a" style="left:378px;top:667px;width:1px;height:16px;background:#000"></div>
<div class="a" style="left:398px;top:667px;width:1px;height:16px;background:#000"></div>
<div class="a" style="left:418px;top:667px;width:1px;height:16px;background:#000"></div>
<div class="a" style="left:443px;top:667px;width:1px;height:16px;background:#000"></div>
<div class="a" style="left:538px;top:667px;width:1px;height:16px;background:#000"></div>
<div class="a" style="left:632px;top:667px;width:1px;height:16px;background:#000"></div>
<div class="a" style="left:692px;top:667px;width:1px;height:16px;background:#000"></div>
<div class="a" style="left:962px;top:667px;width:1px;height:16px;background:#000"></div>
<div class="a" style="left:1092px;top:667px;width:1px;height:16px;background:#000"></div>
<div class="a" style="left:1259px;top:667px;width:1px;height:16px;background:#000"></div>
<div class="t ms" style="left:422px;top:671px">WT</div>
<div class="t ms" style="left:447.5px;top:671px">geplant</div>
<div class="t ms" style="left:542.5px;top:671px">durchgeführt</div>
<div class="t ms" style="left:637px;top:671px">Auftrag</div>
<div class="t ms" style="left:697px;top:671px">Betreff</div>
<div class="t ms" style="left:966px;top:671px">Kategorie</div>
<div class="t ms" style="left:1096.5px;top:671px">Art</div>
<div class="t ms" style="left:1263px;top:671px">T</div>
<div class="a" style="left:319px;top:684px;width:949px;height:27px;background:#ffffc0"></div>
<svg class="a" style="left:321px;top:694px" width="9" height="9" viewBox="0 0 9 9"><rect x="0.500" y="0.500" width="8" height="8" fill="#fff" stroke="#808080"/><path d="M2 4.500h5M4.500 2v5" stroke="#000" stroke-width="1"/></svg>
<div class="a" style="left:360px;top:689px;width:17px;height:17px;background:#fff"></div>
<svg class="a" style="left:361px;top:690px" width="15" height="14" viewBox="0 0 15 14"><path d="M0.500 5.500l7-5 7 5v8h-14z" fill="#ececec" stroke="#555" stroke-width="0.900"/><path d="M0.500 13.500l5-4.500h4l5 4.500M0.500 5.500l5 3.500M14.500 5.500l-5 3.500" fill="none" stroke="#555" stroke-width="0.800"/></svg>
<svg class="a" style="left:380px;top:688px" width="18" height="18" viewBox="0 0 18 18"><circle cx="9" cy="9" r="8.200" fill="#b9bcc4" stroke="#8a8e98" stroke-width="0.800"/><circle cx="9" cy="9" r="6" fill="#eceef4" stroke="#9a9eaa" stroke-width="0.600"/><path d="M9 9l-2.500-3" stroke="#2a3a9a" stroke-width="1.200"/><path d="M9 9l4 2" stroke="#d83a2a" stroke-width="1"/><path d="M9 9l-1.500 4" stroke="#d83a2a" stroke-width="0.800"/></svg>
<div class="a" style="left:401px;top:689px;width:15px;height:17px;background:#fff"></div>
<svg class="a" style="left:404px;top:691px" width="8" height="13" viewBox="0 0 8 13"><path d="M1.500 8.500v-5a2.500 2.500 0 0 1 5 0v6a2 2 0 0 1-4.500 0v-4.500a1 1 0 0 1 2.500 0v4" fill="none" stroke="#000" stroke-width="1.100"/></svg>
<div class="t" style="left:421.5px;top:692px;font-size:12px;font-weight:bold">Mi</div>
<div class="t" style="left:446.5px;top:692px;font-size:12px;font-weight:bold">22.07.2026 Mi</div>
<div class="t" style="left:549px;top:692px;font-size:12px;font-weight:bold">.&nbsp;&nbsp;.</div>
<div class="t" style="left:636.5px;top:692px;font-size:12px;font-weight:bold">20148</div>
<div class="t" style="left:696.5px;top:692px;font-size:12px;font-weight:bold">Prüfung nach BetrSichV</div>
<div class="t" style="left:965px;top:692px;font-size:12px;font-weight:bold">Wiederkehrende Pr...</div>
<div class="t" style="left:1095px;top:692px;font-size:12px;font-weight:bold">ohne Mängel</div>
<div class="t" style="left:1262px;top:692px;font-size:12px;font-weight:bold">E</div>
<svg class="a" style="left:321px;top:721px" width="9" height="9" viewBox="0 0 9 9"><rect x="0.500" y="0.500" width="8" height="8" fill="#fff" stroke="#808080"/><path d="M2 4.500h5M4.500 2v5" stroke="#000" stroke-width="1"/></svg>
<svg class="a" style="left:361px;top:718px" width="15" height="12" viewBox="0 0 15 12"><rect x="0.500" y="0.500" width="14" height="10.500" fill="#f0e88a" stroke="#000"/><path d="M0.500 0.500l7 6 7-6M0.500 11l5-5M14.500 11l-5-5" fill="none" stroke="#000" stroke-width="0.900"/></svg>
<svg class="a" style="left:380px;top:715px" width="18" height="18" viewBox="0 0 18 18"><circle cx="9" cy="9" r="8.200" fill="#b9bcc4" stroke="#8a8e98" stroke-width="0.800"/><circle cx="9" cy="9" r="6" fill="#eceef4" stroke="#9a9eaa" stroke-width="0.600"/><path d="M9 9l-2.500-3" stroke="#2a3a9a" stroke-width="1.200"/><path d="M9 9l4 2" stroke="#d83a2a" stroke-width="1"/><path d="M9 9l-1.500 4" stroke="#d83a2a" stroke-width="0.800"/></svg>
<div class="a" style="left:401px;top:716px;width:15px;height:17px;background:#fff"></div>
<svg class="a" style="left:404px;top:718px" width="8" height="13" viewBox="0 0 8 13"><path d="M1.500 8.500v-5a2.500 2.500 0 0 1 5 0v6a2 2 0 0 1-4.500 0v-4.500a1 1 0 0 1 2.500 0v4" fill="none" stroke="#000" stroke-width="1.100"/></svg>
<div class="t" style="left:421.5px;top:719px;font-size:12px;font-weight:bold">Di</div>
<div class="t" style="left:446.5px;top:719px;font-size:12px;font-weight:bold">22.07.2025 Di</div>
<div class="t" style="left:541px;top:719px;font-size:12px;font-weight:bold">22.07.2025 Di</div>
<div class="t" style="left:636.5px;top:719px;font-size:12px;font-weight:bold">20147</div>
<div class="t" style="left:696.5px;top:719px;font-size:12px;font-weight:bold">Prüfung nach BetrSichV</div>
<div class="t" style="left:965px;top:719px;font-size:12px;font-weight:bold">Wiederkehrende Pr...</div>
<div class="t" style="left:1095px;top:719px;font-size:12px;font-weight:bold">ohne Mängel</div>
<div class="t" style="left:1262px;top:719px;font-size:12px;font-weight:bold">E</div>
<svg class="a" style="left:321px;top:748px" width="9" height="9" viewBox="0 0 9 9"><rect x="0.500" y="0.500" width="8" height="8" fill="#fff" stroke="#808080"/><path d="M2 4.500h5M4.500 2v5" stroke="#000" stroke-width="1"/></svg>
<svg class="a" style="left:361px;top:745px" width="15" height="12" viewBox="0 0 15 12"><rect x="0.500" y="0.500" width="14" height="10.500" fill="#f0e88a" stroke="#000"/><path d="M0.500 0.500l7 6 7-6M0.500 11l5-5M14.500 11l-5-5" fill="none" stroke="#000" stroke-width="0.900"/></svg>
<svg class="a" style="left:380px;top:742px" width="18" height="18" viewBox="0 0 18 18"><circle cx="9" cy="9" r="8.200" fill="#b9bcc4" stroke="#8a8e98" stroke-width="0.800"/><circle cx="9" cy="9" r="6" fill="#eceef4" stroke="#9a9eaa" stroke-width="0.600"/><path d="M9 9l-2.500-3" stroke="#2a3a9a" stroke-width="1.200"/><path d="M9 9l4 2" stroke="#d83a2a" stroke-width="1"/><path d="M9 9l-1.500 4" stroke="#d83a2a" stroke-width="0.800"/></svg>
<div class="a" style="left:401px;top:743px;width:15px;height:17px;background:#fff"></div>
<svg class="a" style="left:404px;top:745px" width="8" height="13" viewBox="0 0 8 13"><path d="M1.500 8.500v-5a2.500 2.500 0 0 1 5 0v6a2 2 0 0 1-4.500 0v-4.500a1 1 0 0 1 2.500 0v4" fill="none" stroke="#000" stroke-width="1.100"/></svg>
<div class="t" style="left:421.5px;top:746px;font-size:12px;font-weight:bold">Mo</div>
<div class="t" style="left:446.5px;top:746px;font-size:12px;font-weight:bold">22.07.2024 Mo</div>
<div class="t" style="left:541px;top:746px;font-size:12px;font-weight:bold">22.07.2024 Mo</div>
<div class="t" style="left:636.5px;top:746px;font-size:12px;font-weight:bold">20146</div>
<div class="t" style="left:696.5px;top:746px;font-size:12px;font-weight:bold">Prüfung nach BetrSichV</div>
<div class="t" style="left:965px;top:746px;font-size:12px;font-weight:bold">Wiederkehrende Pr...</div>
<div class="t" style="left:1095px;top:746px;font-size:12px;font-weight:bold">ohne Mängel</div>
<div class="t" style="left:1262px;top:746px;font-size:12px;font-weight:bold">E</div>
<div class="a" style="left:319px;top:912px;width:949px;height:16px;background:#f0f0f0"></div>
<div class="a" style="left:336px;top:913px;width:17px;height:14px;background:#cdcdcd"></div>
<svg class="a" style="left:323px;top:915px" width="8" height="10" viewBox="0 0 8 10"><path d="M6 1.500l-3.500 3.500 3.500 3.500" stroke="#555" stroke-width="1.600" fill="none"/></svg>
<svg class="a" style="left:1256px;top:915px" width="8" height="10" viewBox="0 0 8 10"><path d="M2 1.500l3.500 3.500-3.500 3.500" stroke="#555" stroke-width="1.600" fill="none"/></svg>
<div class="a" style="left:0;top:928px;width:1278px;height:7px;background:#fff"></div>
<div class="a" style="left:0;top:935px;width:1278px;height:23px;background:#f0f0f0;border-top:1px solid #a0a0a0"></div>
<div class="a" style="left:0;top:958px;width:1280px;height:2px;background:#1d3557"></div>
<div class="t ms" style="left:0.500px;top:943px">Blättern</div>
<div class="a" style="left:1096px;top:936px;width:1px;height:22px;background:#000"></div>
<div class="a" style="left:1099px;top:938px;width:20px;height:19px;border:1px solid;border-color:#a0a0a0 #fff #fff #a0a0a0"></div>
<div class="a" style="left:1121px;top:938px;width:30px;height:19px;border:1px solid;border-color:#a0a0a0 #fff #fff #a0a0a0"></div>
<div class="a" style="left:1153px;top:938px;width:43px;height:19px;border:1px solid;border-color:#a0a0a0 #fff #fff #a0a0a0"></div>
<div class="a" style="left:1198px;top:938px;width:61px;height:19px;border:1px solid;border-color:#a0a0a0 #fff #fff #a0a0a0"></div>
<div class="t ms" style="left:1123.500px;top:943px">NUM</div>
<div class="t ms" style="left:1200px;top:943px">13:36:07</div>
<svg class="a" style="left:1265px;top:947px" width="10" height="10" viewBox="0 0 10 10" fill="#b8b8b8"><rect x="7" y="1" width="2" height="2"/><rect x="4" y="4" width="2" height="2"/><rect x="7" y="4" width="2" height="2"/><rect x="1" y="7" width="2" height="2"/><rect x="4" y="7" width="2" height="2"/><rect x="7" y="7" width="2" height="2"/></svg>
<!--MAIN-END-->
</body></html>
